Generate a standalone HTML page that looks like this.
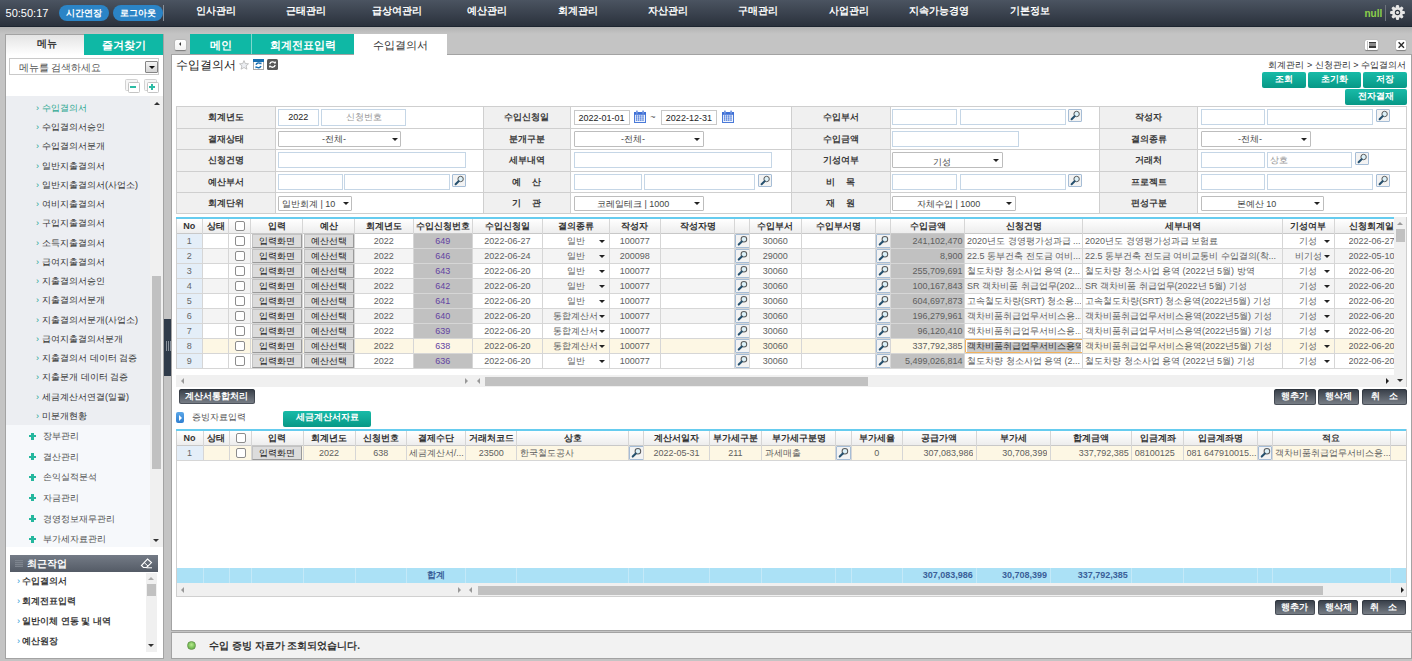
<!DOCTYPE html><html><head><meta charset="utf-8"><style>body{margin:0;width:1412px;height:661px;overflow:hidden;position:relative;font-family:"Liberation Sans",sans-serif}body>div,body>svg{position:absolute}</style></head><body><div style="left:0px;top:0px;width:1412px;height:661px;background:#c4c4c4"></div>
<div style="left:0px;top:27px;width:1412px;height:7px;background:linear-gradient(#b3b3b3,#c4c4c4)"></div>
<div style="left:0px;top:0px;width:1412px;height:27px;background:linear-gradient(#4b5461,#2a313c);border-bottom:1px solid #1d2530;box-sizing:border-box"></div>
<div style="left:4px;top:4px;width:46px;height:18px;line-height:18px;text-align:center;white-space:nowrap;overflow:hidden;color:#fff;font-size:11px">50:50:17</div>
<div style="left:59px;top:5px;width:50px;height:16px;background:#2b84c6;border-radius:8px"></div>
<div style="left:59px;top:5px;width:50px;height:16px;line-height:16px;text-align:center;white-space:nowrap;overflow:hidden;color:#fff;font-size:9px;font-weight:bold">시간연장</div>
<div style="left:113px;top:5px;width:50px;height:16px;background:#2b84c6;border-radius:8px"></div>
<div style="left:113px;top:5px;width:50px;height:16px;line-height:16px;text-align:center;white-space:nowrap;overflow:hidden;color:#fff;font-size:9px;font-weight:bold">로그아웃</div>
<div style="left:163px;top:5px;width:1px;height:16px;background:#8a9099"></div>
<div style="left:171.0px;top:2px;width:90px;height:17px;line-height:17px;text-align:center;white-space:nowrap;overflow:hidden;color:#fff;font-size:10px;font-weight:bold">인사관리</div>
<div style="left:261.4px;top:2px;width:90px;height:17px;line-height:17px;text-align:center;white-space:nowrap;overflow:hidden;color:#fff;font-size:10px;font-weight:bold">근태관리</div>
<div style="left:351.8px;top:2px;width:90px;height:17px;line-height:17px;text-align:center;white-space:nowrap;overflow:hidden;color:#fff;font-size:10px;font-weight:bold">급상여관리</div>
<div style="left:442.20000000000005px;top:2px;width:90px;height:17px;line-height:17px;text-align:center;white-space:nowrap;overflow:hidden;color:#fff;font-size:10px;font-weight:bold">예산관리</div>
<div style="left:532.6px;top:2px;width:90px;height:17px;line-height:17px;text-align:center;white-space:nowrap;overflow:hidden;color:#fff;font-size:10px;font-weight:bold">회계관리</div>
<div style="left:623.0px;top:2px;width:90px;height:17px;line-height:17px;text-align:center;white-space:nowrap;overflow:hidden;color:#fff;font-size:10px;font-weight:bold">자산관리</div>
<div style="left:713.4000000000001px;top:2px;width:90px;height:17px;line-height:17px;text-align:center;white-space:nowrap;overflow:hidden;color:#fff;font-size:10px;font-weight:bold">구매관리</div>
<div style="left:803.8000000000001px;top:2px;width:90px;height:17px;line-height:17px;text-align:center;white-space:nowrap;overflow:hidden;color:#fff;font-size:10px;font-weight:bold">사업관리</div>
<div style="left:894.2px;top:2px;width:90px;height:17px;line-height:17px;text-align:center;white-space:nowrap;overflow:hidden;color:#fff;font-size:10px;font-weight:bold">지속가능경영</div>
<div style="left:984.5999999999999px;top:2px;width:90px;height:17px;line-height:17px;text-align:center;white-space:nowrap;overflow:hidden;color:#fff;font-size:10px;font-weight:bold">기본정보</div>
<div style="left:1360px;top:4.6px;width:22.3px;height:17px;line-height:17px;text-align:right;white-space:nowrap;overflow:hidden;color:#8ccf4a;font-size:10px;font-weight:bold">null</div>
<div style="left:1385px;top:5px;width:1.2px;height:16px;background:#6d737c"></div>
<svg style="position:absolute;left:1389.9px;top:5.1px" width="15" height="15" viewBox="-7.5 -7.5 15 15"><rect x="-1.6" y="-7.4" width="3.2" height="3.6" rx="1.2" fill="#e6e6e6" transform="rotate(0)"/><rect x="-1.6" y="-7.4" width="3.2" height="3.6" rx="1.2" fill="#e6e6e6" transform="rotate(45)"/><rect x="-1.6" y="-7.4" width="3.2" height="3.6" rx="1.2" fill="#e6e6e6" transform="rotate(90)"/><rect x="-1.6" y="-7.4" width="3.2" height="3.6" rx="1.2" fill="#e6e6e6" transform="rotate(135)"/><rect x="-1.6" y="-7.4" width="3.2" height="3.6" rx="1.2" fill="#e6e6e6" transform="rotate(180)"/><rect x="-1.6" y="-7.4" width="3.2" height="3.6" rx="1.2" fill="#e6e6e6" transform="rotate(225)"/><rect x="-1.6" y="-7.4" width="3.2" height="3.6" rx="1.2" fill="#e6e6e6" transform="rotate(270)"/><rect x="-1.6" y="-7.4" width="3.2" height="3.6" rx="1.2" fill="#e6e6e6" transform="rotate(315)"/><circle r="5.4" fill="#e6e6e6"/><circle r="2.7" fill="#2c333d"/><circle r="1.6" fill="#e6e6e6"/></svg>
<div style="left:5px;top:34px;width:159px;height:625px;background:#fff;border:1px solid #a3a3a3;box-sizing:border-box"></div>
<div style="left:6px;top:35px;width:78px;height:20px;background:linear-gradient(#e4e4e4,#fff)"></div>
<div style="left:8px;top:34px;width:78px;height:20px;line-height:20px;text-align:center;white-space:nowrap;overflow:hidden;color:#3a3a3a;font-size:10px;font-weight:bold">메뉴</div>
<div style="left:84px;top:34px;width:79px;height:21px;background:#0fb8a5"></div>
<div style="left:84px;top:35px;width:79px;height:20px;line-height:20px;text-align:center;white-space:nowrap;overflow:hidden;color:#fff;font-size:11px;font-weight:bold">즐겨찾기</div>
<div style="left:9px;top:58px;width:150px;height:17px;background:#fff;border:1px solid #c9c9c9;box-sizing:border-box"></div>
<div style="left:18.5px;top:60px;width:120px;height:15px;line-height:15px;text-align:left;white-space:nowrap;overflow:hidden;color:#555;font-size:9.5px">메뉴를 검색하세요</div>
<div style="left:145px;top:61px;width:13px;height:12px;background:linear-gradient(#f4f4f4,#d4d4d4);border:1px solid #858585;box-sizing:border-box;border-radius:1px"></div>
<div style="left:148.7px;top:65.7px;width:0;height:0;border-left:3px solid transparent;border-right:3px solid transparent;border-top:3.3px solid #111"></div>
<div style="left:125px;top:79.4px;width:12.5px;height:11.6px;background:#f6f6f6;border:1px solid #d2d2d2;border-radius:1.5px;box-sizing:border-box"></div>
<div style="left:127.5px;top:81.7px;width:12.3px;height:11px;background:#fff;border:1px solid #c4c4c4;border-radius:1.5px;box-sizing:border-box"></div>
<div style="left:130.2px;top:86px;width:6.3px;height:2.2px;background:#2dbba4"></div>
<div style="left:144px;top:79.4px;width:12.5px;height:11.6px;background:#f6f6f6;border:1px solid #d2d2d2;border-radius:1.5px;box-sizing:border-box"></div>
<div style="left:146.5px;top:81.7px;width:12.3px;height:11px;background:#fff;border:1px solid #c4c4c4;border-radius:1.5px;box-sizing:border-box"></div>
<div style="left:149.2px;top:86px;width:6.3px;height:2.2px;background:#2dbba4"></div>
<div style="left:151.25px;top:83.9px;width:2.2px;height:6.4px;background:#2dbba4"></div>
<div style="left:6px;top:96px;width:144px;height:329px;background:#eceef2"></div>
<div style="left:6px;top:425px;width:144px;height:122px;background:#f6f8fb"></div>
<div style="left:150px;top:96px;width:13px;height:451px;background:#f0f0f0"></div>
<div style="left:152px;top:276px;width:9px;height:193px;background:#c1c1c1"></div>
<div style="left:153.8px;top:102px;width:0;height:0;border-left:3px solid transparent;border-right:3px solid transparent;border-bottom:3.2px solid #333"></div>
<div style="left:153px;top:538.5px;width:0;height:0;border-left:3px solid transparent;border-right:3px solid transparent;border-top:3.2px solid #333"></div>
<div style="left:36px;top:100.9px;width:6px;height:14px;line-height:14px;text-align:left;white-space:nowrap;overflow:hidden;color:#1aa593;font-size:9px">›</div>
<div style="left:42px;top:99.9px;width:105px;height:16px;line-height:16px;text-align:left;white-space:nowrap;overflow:hidden;color:#2aa790;font-size:9px">수입결의서</div>
<div style="left:36px;top:120.15px;width:6px;height:14px;line-height:14px;text-align:left;white-space:nowrap;overflow:hidden;color:#1aa593;font-size:9px">›</div>
<div style="left:42px;top:119.15px;width:105px;height:16px;line-height:16px;text-align:left;white-space:nowrap;overflow:hidden;color:#333;font-size:9px">수입결의서승인</div>
<div style="left:36px;top:139.39999999999998px;width:6px;height:14px;line-height:14px;text-align:left;white-space:nowrap;overflow:hidden;color:#1aa593;font-size:9px">›</div>
<div style="left:42px;top:138.39999999999998px;width:105px;height:16px;line-height:16px;text-align:left;white-space:nowrap;overflow:hidden;color:#333;font-size:9px">수입결의서분개</div>
<div style="left:36px;top:158.64999999999998px;width:6px;height:14px;line-height:14px;text-align:left;white-space:nowrap;overflow:hidden;color:#1aa593;font-size:9px">›</div>
<div style="left:42px;top:157.64999999999998px;width:105px;height:16px;line-height:16px;text-align:left;white-space:nowrap;overflow:hidden;color:#333;font-size:9px">일반지출결의서</div>
<div style="left:36px;top:177.89999999999998px;width:6px;height:14px;line-height:14px;text-align:left;white-space:nowrap;overflow:hidden;color:#1aa593;font-size:9px">›</div>
<div style="left:42px;top:176.89999999999998px;width:105px;height:16px;line-height:16px;text-align:left;white-space:nowrap;overflow:hidden;color:#333;font-size:9px">일반지출결의서(사업소)</div>
<div style="left:36px;top:197.14999999999998px;width:6px;height:14px;line-height:14px;text-align:left;white-space:nowrap;overflow:hidden;color:#1aa593;font-size:9px">›</div>
<div style="left:42px;top:196.14999999999998px;width:105px;height:16px;line-height:16px;text-align:left;white-space:nowrap;overflow:hidden;color:#333;font-size:9px">여비지출결의서</div>
<div style="left:36px;top:216.39999999999998px;width:6px;height:14px;line-height:14px;text-align:left;white-space:nowrap;overflow:hidden;color:#1aa593;font-size:9px">›</div>
<div style="left:42px;top:215.39999999999998px;width:105px;height:16px;line-height:16px;text-align:left;white-space:nowrap;overflow:hidden;color:#333;font-size:9px">구입지출결의서</div>
<div style="left:36px;top:235.64999999999998px;width:6px;height:14px;line-height:14px;text-align:left;white-space:nowrap;overflow:hidden;color:#1aa593;font-size:9px">›</div>
<div style="left:42px;top:234.64999999999998px;width:105px;height:16px;line-height:16px;text-align:left;white-space:nowrap;overflow:hidden;color:#333;font-size:9px">소득지출결의서</div>
<div style="left:36px;top:254.89999999999998px;width:6px;height:14px;line-height:14px;text-align:left;white-space:nowrap;overflow:hidden;color:#1aa593;font-size:9px">›</div>
<div style="left:42px;top:253.89999999999998px;width:105px;height:16px;line-height:16px;text-align:left;white-space:nowrap;overflow:hidden;color:#333;font-size:9px">급여지출결의서</div>
<div style="left:36px;top:274.15px;width:6px;height:14px;line-height:14px;text-align:left;white-space:nowrap;overflow:hidden;color:#1aa593;font-size:9px">›</div>
<div style="left:42px;top:273.15px;width:105px;height:16px;line-height:16px;text-align:left;white-space:nowrap;overflow:hidden;color:#333;font-size:9px">지출결의서승인</div>
<div style="left:36px;top:293.4px;width:6px;height:14px;line-height:14px;text-align:left;white-space:nowrap;overflow:hidden;color:#1aa593;font-size:9px">›</div>
<div style="left:42px;top:292.4px;width:105px;height:16px;line-height:16px;text-align:left;white-space:nowrap;overflow:hidden;color:#333;font-size:9px">지출결의서분개</div>
<div style="left:36px;top:312.65px;width:6px;height:14px;line-height:14px;text-align:left;white-space:nowrap;overflow:hidden;color:#1aa593;font-size:9px">›</div>
<div style="left:42px;top:311.65px;width:105px;height:16px;line-height:16px;text-align:left;white-space:nowrap;overflow:hidden;color:#333;font-size:9px">지출결의서분개(사업소)</div>
<div style="left:36px;top:331.9px;width:6px;height:14px;line-height:14px;text-align:left;white-space:nowrap;overflow:hidden;color:#1aa593;font-size:9px">›</div>
<div style="left:42px;top:330.9px;width:105px;height:16px;line-height:16px;text-align:left;white-space:nowrap;overflow:hidden;color:#333;font-size:9px">급여지출결의서분개</div>
<div style="left:36px;top:351.15px;width:6px;height:14px;line-height:14px;text-align:left;white-space:nowrap;overflow:hidden;color:#1aa593;font-size:9px">›</div>
<div style="left:42px;top:350.15px;width:105px;height:16px;line-height:16px;text-align:left;white-space:nowrap;overflow:hidden;color:#333;font-size:9px">지출결의서 데이터 검증</div>
<div style="left:36px;top:370.4px;width:6px;height:14px;line-height:14px;text-align:left;white-space:nowrap;overflow:hidden;color:#1aa593;font-size:9px">›</div>
<div style="left:42px;top:369.4px;width:105px;height:16px;line-height:16px;text-align:left;white-space:nowrap;overflow:hidden;color:#333;font-size:9px">지출분개 데이터 검증</div>
<div style="left:36px;top:389.65px;width:6px;height:14px;line-height:14px;text-align:left;white-space:nowrap;overflow:hidden;color:#1aa593;font-size:9px">›</div>
<div style="left:42px;top:388.65px;width:105px;height:16px;line-height:16px;text-align:left;white-space:nowrap;overflow:hidden;color:#333;font-size:9px">세금계산서연결(일괄)</div>
<div style="left:36px;top:408.9px;width:6px;height:14px;line-height:14px;text-align:left;white-space:nowrap;overflow:hidden;color:#1aa593;font-size:9px">›</div>
<div style="left:42px;top:407.9px;width:105px;height:16px;line-height:16px;text-align:left;white-space:nowrap;overflow:hidden;color:#333;font-size:9px">미분개현황</div>
<div style="left:29px;top:434.9px;width:7px;height:2.2px;background:#24b79e"></div>
<div style="left:31.4px;top:432.5px;width:2.2px;height:7px;background:#24b79e"></div>
<div style="left:43px;top:428.0px;width:105px;height:16px;line-height:16px;text-align:left;white-space:nowrap;overflow:hidden;color:#505050;font-size:9px">장부관리</div>
<div style="left:29px;top:455.54999999999995px;width:7px;height:2.2px;background:#24b79e"></div>
<div style="left:31.4px;top:453.15px;width:2.2px;height:7px;background:#24b79e"></div>
<div style="left:43px;top:448.65px;width:105px;height:16px;line-height:16px;text-align:left;white-space:nowrap;overflow:hidden;color:#505050;font-size:9px">결산관리</div>
<div style="left:29px;top:476.2px;width:7px;height:2.2px;background:#24b79e"></div>
<div style="left:31.4px;top:473.8px;width:2.2px;height:7px;background:#24b79e"></div>
<div style="left:43px;top:469.3px;width:105px;height:16px;line-height:16px;text-align:left;white-space:nowrap;overflow:hidden;color:#505050;font-size:9px">손익실적분석</div>
<div style="left:29px;top:496.84999999999997px;width:7px;height:2.2px;background:#24b79e"></div>
<div style="left:31.4px;top:494.45px;width:2.2px;height:7px;background:#24b79e"></div>
<div style="left:43px;top:489.95px;width:105px;height:16px;line-height:16px;text-align:left;white-space:nowrap;overflow:hidden;color:#505050;font-size:9px">자금관리</div>
<div style="left:29px;top:517.5px;width:7px;height:2.2px;background:#24b79e"></div>
<div style="left:31.4px;top:515.1px;width:2.2px;height:7px;background:#24b79e"></div>
<div style="left:43px;top:510.6px;width:105px;height:16px;line-height:16px;text-align:left;white-space:nowrap;overflow:hidden;color:#505050;font-size:9px">경영정보재무관리</div>
<div style="left:29px;top:538.15px;width:7px;height:2.2px;background:#24b79e"></div>
<div style="left:31.4px;top:535.75px;width:2.2px;height:7px;background:#24b79e"></div>
<div style="left:43px;top:531.25px;width:105px;height:16px;line-height:16px;text-align:left;white-space:nowrap;overflow:hidden;color:#505050;font-size:9px">부가세자료관리</div>
<div style="left:10px;top:554.5px;width:148.3px;height:17px;background:linear-gradient(#747b86,#545b66)"></div>
<div style="left:14.8px;top:560px;width:8.5px;height:7px;background:repeating-linear-gradient(#7d848e 0 1px,#6a717b 1px 2px)"></div>
<div style="left:27px;top:554.5px;width:60px;height:17px;line-height:17px;text-align:left;white-space:nowrap;overflow:hidden;color:#fff;font-size:9.5px;font-weight:bold">최근작업</div>
<svg style="position:absolute;left:140px;top:558px" width="13" height="11" viewBox="0 0 13 11"><path d="M7.5 1L11.5 4.6 6.6 9.5H3.4L1.4 7.5Z" fill="none" stroke="#fff" stroke-width="1.1"/><path d="M4.2 4.6L8.2 8.2" stroke="#fff" stroke-width="1"/><path d="M6.5 9.8H12" stroke="#fff" stroke-width="1"/></svg>
<div style="left:146px;top:573px;width:11px;height:79px;background:#f0f0f0"></div>
<div style="left:147px;top:584px;width:9px;height:12px;background:#c1c1c1"></div>
<div style="left:148px;top:577px;width:0;height:0;border-left:3.5px solid transparent;border-right:3.5px solid transparent;border-bottom:3.5px solid #aaa"></div>
<div style="left:148px;top:644px;width:0;height:0;border-left:3.5px solid transparent;border-right:3.5px solid transparent;border-top:3.5px solid #333"></div>
<div style="left:17px;top:574.2px;width:6px;height:14px;line-height:14px;text-align:left;white-space:nowrap;overflow:hidden;color:#1e9ad6;font-size:9px">›</div>
<div style="left:22px;top:573.2px;width:120px;height:16px;line-height:16px;text-align:left;white-space:nowrap;overflow:hidden;color:#3a3a3a;font-size:9px;font-weight:bold">수입결의서</div>
<div style="left:17px;top:594.0px;width:6px;height:14px;line-height:14px;text-align:left;white-space:nowrap;overflow:hidden;color:#1e9ad6;font-size:9px">›</div>
<div style="left:22px;top:593.0px;width:120px;height:16px;line-height:16px;text-align:left;white-space:nowrap;overflow:hidden;color:#3a3a3a;font-size:9px;font-weight:bold">회계전표입력</div>
<div style="left:17px;top:613.8000000000001px;width:6px;height:14px;line-height:14px;text-align:left;white-space:nowrap;overflow:hidden;color:#1e9ad6;font-size:9px">›</div>
<div style="left:22px;top:612.8000000000001px;width:120px;height:16px;line-height:16px;text-align:left;white-space:nowrap;overflow:hidden;color:#3a3a3a;font-size:9px;font-weight:bold">일반이체 연동 및 내역</div>
<div style="left:17px;top:633.6px;width:6px;height:14px;line-height:14px;text-align:left;white-space:nowrap;overflow:hidden;color:#1e9ad6;font-size:9px">›</div>
<div style="left:22px;top:632.6px;width:120px;height:16px;line-height:16px;text-align:left;white-space:nowrap;overflow:hidden;color:#3a3a3a;font-size:9px;font-weight:bold">예산원장</div>
<div style="left:164px;top:319px;width:7px;height:57px;background:#2f3b4a"></div>
<div style="left:165.5px;top:341px;width:1px;height:10px;background:#8a939e"></div>
<div style="left:167.5px;top:341px;width:1px;height:10px;background:#8a939e"></div>
<div style="left:169.5px;top:341px;width:1px;height:10px;background:#8a939e"></div>
<div style="left:174.8px;top:40px;width:11px;height:10.2px;background:linear-gradient(#fff,#f2f2f2);border-radius:1.5px;box-shadow:0 0.5px 1.2px rgba(0,0,0,.4)"></div>
<div style="left:178.6px;top:42.2px;width:0;height:0;border-top:2.9px solid transparent;border-bottom:2.9px solid transparent;border-right:2.9px solid #3a3a3a"></div>
<div style="left:190px;top:34px;width:61px;height:21px;background:#0fb8a5"></div>
<div style="left:190px;top:35px;width:61px;height:20px;line-height:20px;text-align:center;white-space:nowrap;overflow:hidden;color:#fff;font-size:11px;font-weight:bold">메인</div>
<div style="left:251px;top:34px;width:1px;height:21px;background:#7fd8cd"></div>
<div style="left:252px;top:34px;width:102px;height:21px;background:#0fb8a5"></div>
<div style="left:252px;top:35px;width:102px;height:20px;line-height:20px;text-align:center;white-space:nowrap;overflow:hidden;color:#fff;font-size:11px;font-weight:bold">회계전표입력</div>
<div style="left:354px;top:34px;width:93px;height:21px;background:#fff"></div>
<div style="left:354px;top:35px;width:93px;height:20px;line-height:20px;text-align:center;white-space:nowrap;overflow:hidden;color:#333;font-size:11px">수입결의서</div>
<div style="left:1364.5px;top:40px;width:13.5px;height:10px;background:#fff;border-radius:1.5px;box-shadow:0 0.5px 1px rgba(0,0,0,.35)"></div>
<div style="left:1366.5px;top:40.5px;width:1px;height:9px;background:#c4c4c4"></div>
<div style="left:1369.2px;top:42.2px;width:6.6px;height:5.6px;background:linear-gradient(#3a3a3a 0 1.2px,#8a8a8a 1.2px 4.4px,#3a3a3a 4.4px)"></div>
<div style="left:1395.8px;top:40px;width:10.5px;height:10px;background:#fff;border-radius:1.5px;box-shadow:0 0.5px 1px rgba(0,0,0,.35)"></div>
<svg style="position:absolute;left:1395.8px;top:40px" width="10.5" height="10" viewBox="0 0 10.5 10"><path d="M2.6 2.2L8 7.8M8 2.2L2.6 7.8" stroke="#2a2a2a" stroke-width="1.4"/></svg>
<div style="left:171px;top:54px;width:1241px;height:577px;background:#fff;border:1px solid #a3a3a3;box-sizing:border-box"></div>
<div style="left:354px;top:54px;width:93px;height:2px;background:#fff"></div>
<div style="left:176px;top:56px;width:70px;height:19px;line-height:19px;text-align:left;white-space:nowrap;overflow:hidden;color:#222;font-size:11.5px">수입결의서</div>
<svg style="position:absolute;left:239px;top:60px" width="10" height="10" viewBox="0 0 10 10"><path d="M5 .6L6.3 3.6 9.5 3.8 7.1 5.9 7.9 9.2 5 7.5 2.1 9.2 2.9 5.9 .5 3.8 3.7 3.6Z" fill="#eceef2" stroke="#b5b5b5" stroke-width=".8"/></svg>
<svg style="position:absolute;left:253px;top:59px" width="11" height="11" viewBox="0 0 11 11"><rect x=".5" y=".5" width="10" height="10" fill="#fff" stroke="#a8a8a8"/><rect x="0" y="0" width="11" height="3" fill="#1a6fb0"/><path d="M3 5.8A2.6 2.6 0 0 1 7.6 5" stroke="#1a6fb0" stroke-width="1.4" fill="none"/><path d="M8 7A2.6 2.6 0 0 1 3.4 7.6" stroke="#1a6fb0" stroke-width="1.4" fill="none"/><path d="M6.6 3.8L8.4 5.6 8.6 3.4Z" fill="#1a6fb0"/><path d="M4.4 8.8L2.6 7 2.4 9.2Z" fill="#1a6fb0"/></svg>
<svg style="position:absolute;left:267px;top:59px" width="11" height="11" viewBox="0 0 11 11"><rect x="0" y="0" width="11" height="11" rx="1.5" fill="#585858"/><path d="M2.8 5.2A2.8 2.8 0 0 1 8 4.4" stroke="#fff" stroke-width="1.3" fill="none"/><path d="M8.2 6A2.8 2.8 0 0 1 3 6.8" stroke="#fff" stroke-width="1.3" fill="none"/><path d="M7 3L8.8 4.8 9 2.6Z" fill="#fff"/><path d="M4 8L2.2 6.2 2 8.4Z" fill="#fff"/></svg>
<div style="left:1200px;top:57px;width:206px;height:16px;line-height:16px;text-align:right;white-space:nowrap;overflow:hidden;color:#333;font-size:9px">회계관리 &gt; 신청관리 &gt; 수입결의서</div>
<div style="left:1262px;top:72px;width:44px;height:16px;background:linear-gradient(#18bba8,#079886);border-radius:2px"></div>
<div style="left:1262px;top:70.7px;width:44px;height:16px;line-height:16px;text-align:center;white-space:nowrap;overflow:hidden;color:#fff;font-size:9px;font-weight:bold">조회</div>
<div style="left:1308px;top:72px;width:52.5px;height:16px;background:linear-gradient(#18bba8,#079886);border-radius:2px"></div>
<div style="left:1308px;top:70.7px;width:52.5px;height:16px;line-height:16px;text-align:center;white-space:nowrap;overflow:hidden;color:#fff;font-size:9px;font-weight:bold">초기화</div>
<div style="left:1363px;top:72px;width:44px;height:16px;background:linear-gradient(#18bba8,#079886);border-radius:2px"></div>
<div style="left:1363px;top:70.7px;width:44px;height:16px;line-height:16px;text-align:center;white-space:nowrap;overflow:hidden;color:#fff;font-size:9px;font-weight:bold">저장</div>
<div style="left:1345px;top:89px;width:62px;height:16px;background:linear-gradient(#18bba8,#079886);border-radius:2px"></div>
<div style="left:1345px;top:87.7px;width:62px;height:16px;line-height:16px;text-align:center;white-space:nowrap;overflow:hidden;color:#fff;font-size:9px;font-weight:bold">전자결재</div>
<div style="left:176px;top:106px;width:1231px;height:108px;background:#fff"></div>
<div style="left:176.5px;top:106.5px;width:98.5px;height:107.30000000000001px;background:#f0f0f0"></div>
<div style="left:483px;top:106.5px;width:87.5px;height:107.30000000000001px;background:#f0f0f0"></div>
<div style="left:791.5px;top:106.5px;width:98.5px;height:107.30000000000001px;background:#f0f0f0"></div>
<div style="left:1099.5px;top:106.5px;width:98.0px;height:107.30000000000001px;background:#f0f0f0"></div>
<div style="left:176px;top:106.0px;width:1231px;height:1px;background:#cfcfcf"></div>
<div style="left:176px;top:127.5px;width:1231px;height:1px;background:#cfcfcf"></div>
<div style="left:176px;top:148.8px;width:1231px;height:1px;background:#cfcfcf"></div>
<div style="left:176px;top:170.5px;width:1231px;height:1px;background:#cfcfcf"></div>
<div style="left:176px;top:191.9px;width:1231px;height:1px;background:#cfcfcf"></div>
<div style="left:176px;top:213.3px;width:1231px;height:1px;background:#cfcfcf"></div>
<div style="left:176.0px;top:106px;width:1px;height:108px;background:#cfcfcf"></div>
<div style="left:274.5px;top:106px;width:1px;height:108px;background:#cfcfcf"></div>
<div style="left:482.5px;top:106px;width:1px;height:108px;background:#cfcfcf"></div>
<div style="left:570.0px;top:106px;width:1px;height:108px;background:#cfcfcf"></div>
<div style="left:791.0px;top:106px;width:1px;height:108px;background:#cfcfcf"></div>
<div style="left:889.5px;top:106px;width:1px;height:108px;background:#cfcfcf"></div>
<div style="left:1099.0px;top:106px;width:1px;height:108px;background:#cfcfcf"></div>
<div style="left:1197.0px;top:106px;width:1px;height:108px;background:#cfcfcf"></div>
<div style="left:1406.0px;top:106px;width:1px;height:108px;background:#cfcfcf"></div>
<div style="left:176.5px;top:107.3px;width:98.5px;height:21.5px;line-height:21.5px;text-align:center;white-space:nowrap;overflow:hidden;color:#3a3a3a;font-size:9px;font-weight:bold">회계년도</div>
<div style="left:483px;top:107.3px;width:87.5px;height:21.5px;line-height:21.5px;text-align:center;white-space:nowrap;overflow:hidden;color:#3a3a3a;font-size:9px;font-weight:bold">수입신청일</div>
<div style="left:791.5px;top:107.3px;width:98.5px;height:21.5px;line-height:21.5px;text-align:center;white-space:nowrap;overflow:hidden;color:#3a3a3a;font-size:9px;font-weight:bold">수입부서</div>
<div style="left:1099.5px;top:107.3px;width:98.0px;height:21.5px;line-height:21.5px;text-align:center;white-space:nowrap;overflow:hidden;color:#3a3a3a;font-size:9px;font-weight:bold">작성자</div>
<div style="left:176.5px;top:128.8px;width:98.5px;height:21.30000000000001px;line-height:21.30000000000001px;text-align:center;white-space:nowrap;overflow:hidden;color:#3a3a3a;font-size:9px;font-weight:bold">결재상태</div>
<div style="left:483px;top:128.8px;width:87.5px;height:21.30000000000001px;line-height:21.30000000000001px;text-align:center;white-space:nowrap;overflow:hidden;color:#3a3a3a;font-size:9px;font-weight:bold">분개구분</div>
<div style="left:791.5px;top:128.8px;width:98.5px;height:21.30000000000001px;line-height:21.30000000000001px;text-align:center;white-space:nowrap;overflow:hidden;color:#3a3a3a;font-size:9px;font-weight:bold">수입금액</div>
<div style="left:1099.5px;top:128.8px;width:98.0px;height:21.30000000000001px;line-height:21.30000000000001px;text-align:center;white-space:nowrap;overflow:hidden;color:#3a3a3a;font-size:9px;font-weight:bold">결의종류</div>
<div style="left:176.5px;top:150.10000000000002px;width:98.5px;height:21.69999999999999px;line-height:21.69999999999999px;text-align:center;white-space:nowrap;overflow:hidden;color:#3a3a3a;font-size:9px;font-weight:bold">신청건명</div>
<div style="left:483px;top:150.10000000000002px;width:87.5px;height:21.69999999999999px;line-height:21.69999999999999px;text-align:center;white-space:nowrap;overflow:hidden;color:#3a3a3a;font-size:9px;font-weight:bold">세부내역</div>
<div style="left:791.5px;top:150.10000000000002px;width:98.5px;height:21.69999999999999px;line-height:21.69999999999999px;text-align:center;white-space:nowrap;overflow:hidden;color:#3a3a3a;font-size:9px;font-weight:bold">기성여부</div>
<div style="left:1099.5px;top:150.10000000000002px;width:98.0px;height:21.69999999999999px;line-height:21.69999999999999px;text-align:center;white-space:nowrap;overflow:hidden;color:#3a3a3a;font-size:9px;font-weight:bold">거래처</div>
<div style="left:176.5px;top:171.8px;width:98.5px;height:21.400000000000006px;line-height:21.400000000000006px;text-align:center;white-space:nowrap;overflow:hidden;color:#3a3a3a;font-size:9px;font-weight:bold">예산부서</div>
<div style="left:483px;top:171.8px;width:87.5px;height:21.400000000000006px;line-height:21.400000000000006px;text-align:center;white-space:nowrap;overflow:hidden;color:#3a3a3a;font-size:9px;font-weight:bold">예　 산</div>
<div style="left:791.5px;top:171.8px;width:98.5px;height:21.400000000000006px;line-height:21.400000000000006px;text-align:center;white-space:nowrap;overflow:hidden;color:#3a3a3a;font-size:9px;font-weight:bold">비　 목</div>
<div style="left:1099.5px;top:171.8px;width:98.0px;height:21.400000000000006px;line-height:21.400000000000006px;text-align:center;white-space:nowrap;overflow:hidden;color:#3a3a3a;font-size:9px;font-weight:bold">프로젝트</div>
<div style="left:176.5px;top:193.20000000000002px;width:98.5px;height:21.400000000000006px;line-height:21.400000000000006px;text-align:center;white-space:nowrap;overflow:hidden;color:#3a3a3a;font-size:9px;font-weight:bold">회계단위</div>
<div style="left:483px;top:193.20000000000002px;width:87.5px;height:21.400000000000006px;line-height:21.400000000000006px;text-align:center;white-space:nowrap;overflow:hidden;color:#3a3a3a;font-size:9px;font-weight:bold">기　 관</div>
<div style="left:791.5px;top:193.20000000000002px;width:98.5px;height:21.400000000000006px;line-height:21.400000000000006px;text-align:center;white-space:nowrap;overflow:hidden;color:#3a3a3a;font-size:9px;font-weight:bold">재　 원</div>
<div style="left:1099.5px;top:193.20000000000002px;width:98.0px;height:21.400000000000006px;line-height:21.400000000000006px;text-align:center;white-space:nowrap;overflow:hidden;color:#3a3a3a;font-size:9px;font-weight:bold">편성구분</div>
<div style="left:277.7px;top:109.2px;width:41.10000000000002px;height:16.39999999999999px;background:#fff;border:1px solid #c5d6e6;box-sizing:border-box"></div>
<div style="left:277.7px;top:109.2px;width:41.10000000000002px;height:16.39999999999999px;line-height:16.39999999999999px;text-align:center;white-space:nowrap;overflow:hidden;color:#222;font-size:9px">2022</div>
<div style="left:320.6px;top:109.2px;width:85.89999999999998px;height:16.39999999999999px;background:#fff;border:1px solid #c5d6e6;box-sizing:border-box"></div>
<div style="left:320.6px;top:109.2px;width:85.89999999999998px;height:16.39999999999999px;line-height:16.39999999999999px;text-align:center;white-space:nowrap;overflow:hidden;color:#999;font-size:9px">신청번호</div>
<div style="left:573.5px;top:110.2px;width:56.1px;height:14.5px;background:#fff;border:1px solid #c8c8c8;box-sizing:border-box"></div>
<div style="left:573.5px;top:110.7px;width:56.1px;height:14.5px;line-height:14.5px;text-align:center;white-space:nowrap;overflow:hidden;color:#222;font-size:9px">2022-01-01</div>
<svg style="position:absolute;left:634px;top:110.3px" width="12" height="13" viewBox="0 0 12 13"><rect x=".5" y="2.5" width="11" height="10" fill="#eef3fc" stroke="#4a7ad8"/><rect x="0" y="2.2" width="12" height="2.6" fill="#3d6fd6"/><rect x="2" y=".6" width="1.8" height="3" fill="#7598e0"/><rect x="8.2" y=".6" width="1.8" height="3" fill="#7598e0"/><circle cx="2.6" cy="6" r=".85" fill="#3d6fd6"/><circle cx="4.7" cy="6" r=".85" fill="#3d6fd6"/><circle cx="6.8" cy="6" r=".85" fill="#3d6fd6"/><circle cx="9" cy="6" r=".85" fill="#3d6fd6"/><circle cx="2.6" cy="8" r=".85" fill="#3d6fd6"/><circle cx="4.7" cy="8" r=".85" fill="#3d6fd6"/><circle cx="6.8" cy="8" r=".85" fill="#3d6fd6"/><circle cx="9" cy="8" r=".85" fill="#3d6fd6"/><circle cx="2.6" cy="10" r=".85" fill="#3d6fd6"/><circle cx="4.7" cy="10" r=".85" fill="#3d6fd6"/><circle cx="6.8" cy="10" r=".85" fill="#3d6fd6"/><circle cx="9" cy="10" r=".85" fill="#3d6fd6"/></svg>
<div style="left:648px;top:110px;width:10px;height:14px;line-height:14px;text-align:center;white-space:nowrap;overflow:hidden;color:#555;font-size:9px">~</div>
<div style="left:660.7px;top:110.2px;width:56.4px;height:14.5px;background:#fff;border:1px solid #c8c8c8;box-sizing:border-box"></div>
<div style="left:660.7px;top:110.7px;width:56.4px;height:14.5px;line-height:14.5px;text-align:center;white-space:nowrap;overflow:hidden;color:#222;font-size:9px">2022-12-31</div>
<svg style="position:absolute;left:722px;top:110.3px" width="12" height="13" viewBox="0 0 12 13"><rect x=".5" y="2.5" width="11" height="10" fill="#eef3fc" stroke="#4a7ad8"/><rect x="0" y="2.2" width="12" height="2.6" fill="#3d6fd6"/><rect x="2" y=".6" width="1.8" height="3" fill="#7598e0"/><rect x="8.2" y=".6" width="1.8" height="3" fill="#7598e0"/><circle cx="2.6" cy="6" r=".85" fill="#3d6fd6"/><circle cx="4.7" cy="6" r=".85" fill="#3d6fd6"/><circle cx="6.8" cy="6" r=".85" fill="#3d6fd6"/><circle cx="9" cy="6" r=".85" fill="#3d6fd6"/><circle cx="2.6" cy="8" r=".85" fill="#3d6fd6"/><circle cx="4.7" cy="8" r=".85" fill="#3d6fd6"/><circle cx="6.8" cy="8" r=".85" fill="#3d6fd6"/><circle cx="9" cy="8" r=".85" fill="#3d6fd6"/><circle cx="2.6" cy="10" r=".85" fill="#3d6fd6"/><circle cx="4.7" cy="10" r=".85" fill="#3d6fd6"/><circle cx="6.8" cy="10" r=".85" fill="#3d6fd6"/><circle cx="9" cy="10" r=".85" fill="#3d6fd6"/></svg>
<div style="left:892.4px;top:109.3px;width:65.10000000000002px;height:16.10000000000001px;background:#fff;border:1px solid #c5d6e6;box-sizing:border-box"></div>
<div style="left:959.7px;top:109.3px;width:106.09999999999991px;height:16.10000000000001px;background:#fff;border:1px solid #c5d6e6;box-sizing:border-box"></div>
<div style="left:1068px;top:109.4px;width:14px;height:13px;background:#f3f3f3;border:1px solid #a6bdd6;box-sizing:border-box;border-radius:1px"></div>
<svg style="position:absolute;left:1068px;top:109.4px" width="14" height="13" viewBox="0 0 14 13"><circle cx="8.6" cy="5" r="2.7" fill="#dcf1f9" stroke="#5a5a5a" stroke-width="1"/><path d="M3.6 10.2L6.6 7.2" stroke="#25506e" stroke-width="2" stroke-linecap="round"/></svg>
<div style="left:1200.5px;top:109.3px;width:64.79999999999995px;height:16.10000000000001px;background:#fff;border:1px solid #c5d6e6;box-sizing:border-box"></div>
<div style="left:1267.3px;top:109.3px;width:106.20000000000005px;height:16.10000000000001px;background:#fff;border:1px solid #c5d6e6;box-sizing:border-box"></div>
<div style="left:1375.5px;top:109.4px;width:14px;height:13px;background:#f3f3f3;border:1px solid #a6bdd6;box-sizing:border-box;border-radius:1px"></div>
<svg style="position:absolute;left:1375.5px;top:109.4px" width="14" height="13" viewBox="0 0 14 13"><circle cx="8.6" cy="5" r="2.7" fill="#dcf1f9" stroke="#5a5a5a" stroke-width="1"/><path d="M3.6 10.2L6.6 7.2" stroke="#25506e" stroke-width="2" stroke-linecap="round"/></svg>
<div style="left:277.7px;top:131.1px;width:123.30000000000001px;height:15.599999999999994px;background:#fff;border:1px solid #bdbdbd;box-sizing:border-box;border-radius:1px"></div>
<div style="left:277.7px;top:132.29999999999998px;width:112.69999999999999px;height:15.599999999999994px;line-height:15.599999999999994px;text-align:center;white-space:nowrap;overflow:hidden;color:#444;font-size:9px">-전체-</div>
<div style="left:391.5px;top:137.7px;width:0;height:0;border-left:3.5px solid transparent;border-right:3.5px solid transparent;border-top:3.5px solid #222"></div>
<div style="left:573.5px;top:131.1px;width:130.10000000000002px;height:15.599999999999994px;background:#fff;border:1px solid #bdbdbd;box-sizing:border-box;border-radius:1px"></div>
<div style="left:573.5px;top:132.29999999999998px;width:119.20000000000005px;height:15.599999999999994px;line-height:15.599999999999994px;text-align:center;white-space:nowrap;overflow:hidden;color:#444;font-size:9px">-전체-</div>
<div style="left:693.8000000000001px;top:137.7px;width:0;height:0;border-left:3.5px solid transparent;border-right:3.5px solid transparent;border-top:3.5px solid #222"></div>
<div style="left:892.4px;top:131.1px;width:126.80000000000007px;height:15.599999999999994px;background:#fff;border:1px solid #c5d6e6;box-sizing:border-box"></div>
<div style="left:1200.5px;top:131.1px;width:110.5px;height:15.599999999999994px;background:#fff;border:1px solid #bdbdbd;box-sizing:border-box;border-radius:1px"></div>
<div style="left:1200.5px;top:132.29999999999998px;width:99.20000000000005px;height:15.599999999999994px;line-height:15.599999999999994px;text-align:center;white-space:nowrap;overflow:hidden;color:#444;font-size:9px">-전체-</div>
<div style="left:1300.8px;top:137.7px;width:0;height:0;border-left:3.5px solid transparent;border-right:3.5px solid transparent;border-top:3.5px solid #222"></div>
<div style="left:277.6px;top:152.3px;width:188.2px;height:16.0px;background:#fff;border:1px solid #c5d6e6;box-sizing:border-box"></div>
<div style="left:573.5px;top:152.3px;width:198.39999999999998px;height:16.0px;background:#fff;border:1px solid #c5d6e6;box-sizing:border-box"></div>
<div style="left:892.4px;top:152.3px;width:110.20000000000005px;height:16.0px;background:#fff;border:1px solid #bdbdbd;box-sizing:border-box;border-radius:1px"></div>
<div style="left:892.4px;top:153.5px;width:99.30000000000007px;height:16.0px;line-height:16.0px;text-align:center;white-space:nowrap;overflow:hidden;color:#444;font-size:9px">기성</div>
<div style="left:992.8000000000001px;top:159.10000000000002px;width:0;height:0;border-left:3.5px solid transparent;border-right:3.5px solid transparent;border-top:3.5px solid #222"></div>
<div style="left:1200.5px;top:152.3px;width:64.79999999999995px;height:16.0px;background:#fff;border:1px solid #c5d6e6;box-sizing:border-box"></div>
<div style="left:1267.3px;top:152.3px;width:85.20000000000005px;height:16.0px;background:#fff;border:1px solid #c5d6e6;box-sizing:border-box"></div>
<div style="left:1270.3px;top:152.3px;width:82.20000000000005px;height:16.0px;line-height:16.0px;text-align:left;white-space:nowrap;overflow:hidden;color:#999;font-size:9px">상호</div>
<div style="left:1355px;top:152.4px;width:14px;height:13px;background:#f3f3f3;border:1px solid #a6bdd6;box-sizing:border-box;border-radius:1px"></div>
<svg style="position:absolute;left:1355px;top:152.4px" width="14" height="13" viewBox="0 0 14 13"><circle cx="8.6" cy="5" r="2.7" fill="#dcf1f9" stroke="#5a5a5a" stroke-width="1"/><path d="M3.6 10.2L6.6 7.2" stroke="#25506e" stroke-width="2" stroke-linecap="round"/></svg>
<div style="left:277.6px;top:173.9px;width:65.0px;height:15.799999999999983px;background:#fff;border:1px solid #c5d6e6;box-sizing:border-box"></div>
<div style="left:344.1px;top:173.9px;width:106.39999999999998px;height:15.799999999999983px;background:#fff;border:1px solid #c5d6e6;box-sizing:border-box"></div>
<div style="left:452.3px;top:174px;width:14px;height:13px;background:#f3f3f3;border:1px solid #a6bdd6;box-sizing:border-box;border-radius:1px"></div>
<svg style="position:absolute;left:452.3px;top:174px" width="14" height="13" viewBox="0 0 14 13"><circle cx="8.6" cy="5" r="2.7" fill="#dcf1f9" stroke="#5a5a5a" stroke-width="1"/><path d="M3.6 10.2L6.6 7.2" stroke="#25506e" stroke-width="2" stroke-linecap="round"/></svg>
<div style="left:573.5px;top:173.9px;width:68.10000000000002px;height:15.799999999999983px;background:#fff;border:1px solid #c5d6e6;box-sizing:border-box"></div>
<div style="left:643.7px;top:173.9px;width:111.59999999999991px;height:15.799999999999983px;background:#fff;border:1px solid #c5d6e6;box-sizing:border-box"></div>
<div style="left:757.6px;top:174px;width:14px;height:13px;background:#f3f3f3;border:1px solid #a6bdd6;box-sizing:border-box;border-radius:1px"></div>
<svg style="position:absolute;left:757.6px;top:174px" width="14" height="13" viewBox="0 0 14 13"><circle cx="8.6" cy="5" r="2.7" fill="#dcf1f9" stroke="#5a5a5a" stroke-width="1"/><path d="M3.6 10.2L6.6 7.2" stroke="#25506e" stroke-width="2" stroke-linecap="round"/></svg>
<div style="left:892.4px;top:173.9px;width:65.10000000000002px;height:15.799999999999983px;background:#fff;border:1px solid #c5d6e6;box-sizing:border-box"></div>
<div style="left:959.7px;top:173.9px;width:106.09999999999991px;height:15.799999999999983px;background:#fff;border:1px solid #c5d6e6;box-sizing:border-box"></div>
<div style="left:1068px;top:174px;width:14px;height:13px;background:#f3f3f3;border:1px solid #a6bdd6;box-sizing:border-box;border-radius:1px"></div>
<svg style="position:absolute;left:1068px;top:174px" width="14" height="13" viewBox="0 0 14 13"><circle cx="8.6" cy="5" r="2.7" fill="#dcf1f9" stroke="#5a5a5a" stroke-width="1"/><path d="M3.6 10.2L6.6 7.2" stroke="#25506e" stroke-width="2" stroke-linecap="round"/></svg>
<div style="left:1200.5px;top:173.9px;width:64.79999999999995px;height:15.799999999999983px;background:#fff;border:1px solid #c5d6e6;box-sizing:border-box"></div>
<div style="left:1267.3px;top:173.9px;width:106.20000000000005px;height:15.799999999999983px;background:#fff;border:1px solid #c5d6e6;box-sizing:border-box"></div>
<div style="left:1375.5px;top:174px;width:14px;height:13px;background:#f3f3f3;border:1px solid #a6bdd6;box-sizing:border-box;border-radius:1px"></div>
<svg style="position:absolute;left:1375.5px;top:174px" width="14" height="13" viewBox="0 0 14 13"><circle cx="8.6" cy="5" r="2.7" fill="#dcf1f9" stroke="#5a5a5a" stroke-width="1"/><path d="M3.6 10.2L6.6 7.2" stroke="#25506e" stroke-width="2" stroke-linecap="round"/></svg>
<div style="left:277.6px;top:195.6px;width:74.69999999999999px;height:15.800000000000011px;background:#fff;border:1px solid #bdbdbd;box-sizing:border-box;border-radius:1px"></div>
<div style="left:282px;top:196.79999999999998px;width:63.39999999999998px;height:15.800000000000011px;line-height:15.800000000000011px;text-align:left;white-space:nowrap;overflow:hidden;color:#444;font-size:9px">일반회계 | 10</div>
<div style="left:342.5px;top:202.3px;width:0;height:0;border-left:3.5px solid transparent;border-right:3.5px solid transparent;border-top:3.5px solid #222"></div>
<div style="left:573.5px;top:195.6px;width:130.10000000000002px;height:15.800000000000011px;background:#fff;border:1px solid #bdbdbd;box-sizing:border-box;border-radius:1px"></div>
<div style="left:573.5px;top:196.79999999999998px;width:119.20000000000005px;height:15.800000000000011px;line-height:15.800000000000011px;text-align:center;white-space:nowrap;overflow:hidden;color:#444;font-size:9px">코레일테크 | 1000</div>
<div style="left:693.8000000000001px;top:202.3px;width:0;height:0;border-left:3.5px solid transparent;border-right:3.5px solid transparent;border-top:3.5px solid #222"></div>
<div style="left:892.4px;top:195.6px;width:123.70000000000005px;height:15.800000000000011px;background:#fff;border:1px solid #bdbdbd;box-sizing:border-box;border-radius:1px"></div>
<div style="left:892.4px;top:196.79999999999998px;width:112.60000000000002px;height:15.800000000000011px;line-height:15.800000000000011px;text-align:center;white-space:nowrap;overflow:hidden;color:#444;font-size:9px">자체수입 | 1000</div>
<div style="left:1006.1px;top:202.3px;width:0;height:0;border-left:3.5px solid transparent;border-right:3.5px solid transparent;border-top:3.5px solid #222"></div>
<div style="left:1200.5px;top:195.6px;width:123.09999999999991px;height:15.800000000000011px;background:#fff;border:1px solid #bdbdbd;box-sizing:border-box;border-radius:1px"></div>
<div style="left:1200.5px;top:196.79999999999998px;width:112.0px;height:15.800000000000011px;line-height:15.800000000000011px;text-align:center;white-space:nowrap;overflow:hidden;color:#444;font-size:9px">본예산 10</div>
<div style="left:1313.6px;top:202.3px;width:0;height:0;border-left:3.5px solid transparent;border-right:3.5px solid transparent;border-top:3.5px solid #222"></div>
<div style="left:176px;top:217px;width:1218px;height:2px;background:#66ccef"></div>
<div style="left:176px;top:219px;width:1218px;height:14.5px;background:linear-gradient(#ffffff,#ececec)"></div>
<div style="left:176px;top:233px;width:1218px;height:1px;background:#c8c8c8"></div>
<div style="left:176px;top:233.5px;width:1218px;height:15px;background:#ffffff"></div>
<div style="left:176px;top:233.5px;width:26.5px;height:15px;background:#e4eef8"></div>
<div style="left:413px;top:233.5px;width:59.3px;height:15px;background:#c1c1c1"></div>
<div style="left:890.6px;top:233.5px;width:74px;height:15px;background:#c1c1c1"></div>
<div style="left:176px;top:248.0px;width:1218px;height:1px;background:#d6d6d6"></div>
<div style="left:176px;top:233.5px;width:26.5px;height:15px;line-height:15px;text-align:center;white-space:nowrap;overflow:hidden;color:#666;font-size:9px">1</div>
<div style="left:234.5px;top:236.0px;width:10px;height:10px;background:#fff;border:1px solid #8c8c8c;box-sizing:border-box;border-radius:2px"></div>
<div style="left:251.5px;top:234.0px;width:50.0px;height:14.0px;background:#dcdcdc;border:1px solid #c2c2c2;border-right-color:#9a9a9a;border-bottom-color:#9a9a9a;box-sizing:border-box"></div>
<div style="left:251.5px;top:234.3px;width:50.0px;height:14.0px;line-height:14.0px;text-align:center;white-space:nowrap;overflow:hidden;color:#1a1a1a;font-size:9px">입력화면</div>
<div style="left:303.5px;top:234.0px;width:50.0px;height:14.0px;background:#dcdcdc;border:1px solid #c2c2c2;border-right-color:#9a9a9a;border-bottom-color:#9a9a9a;box-sizing:border-box"></div>
<div style="left:303.5px;top:234.3px;width:50.0px;height:14.0px;line-height:14.0px;text-align:center;white-space:nowrap;overflow:hidden;color:#1a1a1a;font-size:9px">예산선택</div>
<div style="left:354.5px;top:233.5px;width:58.5px;height:15px;line-height:15px;text-align:center;white-space:nowrap;overflow:hidden;color:#5e5e5e;font-size:9px">2022</div>
<div style="left:413px;top:233.5px;width:59.3px;height:15px;line-height:15px;text-align:center;white-space:nowrap;overflow:hidden;color:#6444a2;font-size:9px">649</div>
<div style="left:472.3px;top:233.5px;width:70.2px;height:15px;line-height:15px;text-align:center;white-space:nowrap;overflow:hidden;color:#5e5e5e;font-size:9px">2022-06-27</div>
<div style="left:545.5px;top:233.5px;width:60px;height:15px;line-height:15px;text-align:center;white-space:nowrap;overflow:hidden;color:#5e5e5e;font-size:9px">일반</div>
<div style="left:598.9px;top:239.5px;width:0;height:0;border-left:3.5px solid transparent;border-right:3.5px solid transparent;border-top:3.5px solid #222"></div>
<div style="left:609px;top:233.5px;width:51.7px;height:15px;line-height:15px;text-align:center;white-space:nowrap;overflow:hidden;color:#5e5e5e;font-size:9px">100077</div>
<div style="left:735px;top:234.0px;width:14.5px;height:13.5px;background:#f3f3f3;border:1px solid #a6bdd6;box-sizing:border-box;border-radius:1px"></div>
<svg style="position:absolute;left:735px;top:234.0px" width="14.5" height="13.5" viewBox="0 0 14 13"><circle cx="8.6" cy="5" r="2.7" fill="#dcf1f9" stroke="#5a5a5a" stroke-width="1"/><path d="M3.6 10.2L6.6 7.2" stroke="#25506e" stroke-width="2" stroke-linecap="round"/></svg>
<div style="left:749.3px;top:233.5px;width:52px;height:15px;line-height:15px;text-align:center;white-space:nowrap;overflow:hidden;color:#5e5e5e;font-size:9px">30060</div>
<div style="left:876px;top:234.0px;width:14.5px;height:13.5px;background:#f3f3f3;border:1px solid #a6bdd6;box-sizing:border-box;border-radius:1px"></div>
<svg style="position:absolute;left:876px;top:234.0px" width="14.5" height="13.5" viewBox="0 0 14 13"><circle cx="8.6" cy="5" r="2.7" fill="#dcf1f9" stroke="#5a5a5a" stroke-width="1"/><path d="M3.6 10.2L6.6 7.2" stroke="#25506e" stroke-width="2" stroke-linecap="round"/></svg>
<div style="left:890.6px;top:233.5px;width:72px;height:15px;line-height:15px;text-align:right;white-space:nowrap;overflow:hidden;color:#5e5e5e;font-size:9px">241,102,470</div>
<div style="left:967px;top:233.5px;width:114px;height:15px;line-height:15px;text-align:left;white-space:nowrap;overflow:hidden;color:#5e5e5e;font-size:9px">2020년도 경영평가성과급 ...</div>
<div style="left:1085px;top:233.5px;width:196px;height:15px;line-height:15px;text-align:left;white-space:nowrap;overflow:hidden;color:#5e5e5e;font-size:9px">2020년도 경영평가성과급 보험료</div>
<div style="left:1288px;top:233.5px;width:40px;height:15px;line-height:15px;text-align:center;white-space:nowrap;overflow:hidden;color:#5e5e5e;font-size:9px">기성</div>
<div style="left:1324.4px;top:239.5px;width:0;height:0;border-left:3.5px solid transparent;border-right:3.5px solid transparent;border-top:3.5px solid #222"></div>
<div style="left:1348.5px;top:233.5px;width:45.5px;height:15px;line-height:15px;text-align:left;white-space:nowrap;overflow:hidden;color:#5e5e5e;font-size:9px">2022-06-27</div>
<div style="left:176px;top:248.5px;width:1218px;height:15px;background:#f4f4f4"></div>
<div style="left:176px;top:248.5px;width:26.5px;height:15px;background:#e4eef8"></div>
<div style="left:413px;top:248.5px;width:59.3px;height:15px;background:#c1c1c1"></div>
<div style="left:890.6px;top:248.5px;width:74px;height:15px;background:#c1c1c1"></div>
<div style="left:176px;top:263.0px;width:1218px;height:1px;background:#d6d6d6"></div>
<div style="left:176px;top:248.5px;width:26.5px;height:15px;line-height:15px;text-align:center;white-space:nowrap;overflow:hidden;color:#666;font-size:9px">2</div>
<div style="left:234.5px;top:251.0px;width:10px;height:10px;background:#fff;border:1px solid #8c8c8c;box-sizing:border-box;border-radius:2px"></div>
<div style="left:251.5px;top:249.0px;width:50.0px;height:14.0px;background:#dcdcdc;border:1px solid #c2c2c2;border-right-color:#9a9a9a;border-bottom-color:#9a9a9a;box-sizing:border-box"></div>
<div style="left:251.5px;top:249.3px;width:50.0px;height:14.0px;line-height:14.0px;text-align:center;white-space:nowrap;overflow:hidden;color:#1a1a1a;font-size:9px">입력화면</div>
<div style="left:303.5px;top:249.0px;width:50.0px;height:14.0px;background:#dcdcdc;border:1px solid #c2c2c2;border-right-color:#9a9a9a;border-bottom-color:#9a9a9a;box-sizing:border-box"></div>
<div style="left:303.5px;top:249.3px;width:50.0px;height:14.0px;line-height:14.0px;text-align:center;white-space:nowrap;overflow:hidden;color:#1a1a1a;font-size:9px">예산선택</div>
<div style="left:354.5px;top:248.5px;width:58.5px;height:15px;line-height:15px;text-align:center;white-space:nowrap;overflow:hidden;color:#5e5e5e;font-size:9px">2022</div>
<div style="left:413px;top:248.5px;width:59.3px;height:15px;line-height:15px;text-align:center;white-space:nowrap;overflow:hidden;color:#6444a2;font-size:9px">646</div>
<div style="left:472.3px;top:248.5px;width:70.2px;height:15px;line-height:15px;text-align:center;white-space:nowrap;overflow:hidden;color:#5e5e5e;font-size:9px">2022-06-24</div>
<div style="left:545.5px;top:248.5px;width:60px;height:15px;line-height:15px;text-align:center;white-space:nowrap;overflow:hidden;color:#5e5e5e;font-size:9px">일반</div>
<div style="left:598.9px;top:254.5px;width:0;height:0;border-left:3.5px solid transparent;border-right:3.5px solid transparent;border-top:3.5px solid #222"></div>
<div style="left:609px;top:248.5px;width:51.7px;height:15px;line-height:15px;text-align:center;white-space:nowrap;overflow:hidden;color:#5e5e5e;font-size:9px">200098</div>
<div style="left:735px;top:249.0px;width:14.5px;height:13.5px;background:#f3f3f3;border:1px solid #a6bdd6;box-sizing:border-box;border-radius:1px"></div>
<svg style="position:absolute;left:735px;top:249.0px" width="14.5" height="13.5" viewBox="0 0 14 13"><circle cx="8.6" cy="5" r="2.7" fill="#dcf1f9" stroke="#5a5a5a" stroke-width="1"/><path d="M3.6 10.2L6.6 7.2" stroke="#25506e" stroke-width="2" stroke-linecap="round"/></svg>
<div style="left:749.3px;top:248.5px;width:52px;height:15px;line-height:15px;text-align:center;white-space:nowrap;overflow:hidden;color:#5e5e5e;font-size:9px">29000</div>
<div style="left:876px;top:249.0px;width:14.5px;height:13.5px;background:#f3f3f3;border:1px solid #a6bdd6;box-sizing:border-box;border-radius:1px"></div>
<svg style="position:absolute;left:876px;top:249.0px" width="14.5" height="13.5" viewBox="0 0 14 13"><circle cx="8.6" cy="5" r="2.7" fill="#dcf1f9" stroke="#5a5a5a" stroke-width="1"/><path d="M3.6 10.2L6.6 7.2" stroke="#25506e" stroke-width="2" stroke-linecap="round"/></svg>
<div style="left:890.6px;top:248.5px;width:72px;height:15px;line-height:15px;text-align:right;white-space:nowrap;overflow:hidden;color:#5e5e5e;font-size:9px">8,900</div>
<div style="left:967px;top:248.5px;width:114px;height:15px;line-height:15px;text-align:left;white-space:nowrap;overflow:hidden;color:#5e5e5e;font-size:9px">22.5 동부건축 전도금 여비...</div>
<div style="left:1085px;top:248.5px;width:196px;height:15px;line-height:15px;text-align:left;white-space:nowrap;overflow:hidden;color:#5e5e5e;font-size:9px">22.5 동부건축 전도금 여비교통비 수입결의(착...</div>
<div style="left:1288px;top:248.5px;width:40px;height:15px;line-height:15px;text-align:center;white-space:nowrap;overflow:hidden;color:#5e5e5e;font-size:9px">비기성</div>
<div style="left:1324.4px;top:254.5px;width:0;height:0;border-left:3.5px solid transparent;border-right:3.5px solid transparent;border-top:3.5px solid #222"></div>
<div style="left:1348.5px;top:248.5px;width:45.5px;height:15px;line-height:15px;text-align:left;white-space:nowrap;overflow:hidden;color:#5e5e5e;font-size:9px">2022-05-10</div>
<div style="left:176px;top:263.5px;width:1218px;height:15px;background:#ffffff"></div>
<div style="left:176px;top:263.5px;width:26.5px;height:15px;background:#e4eef8"></div>
<div style="left:413px;top:263.5px;width:59.3px;height:15px;background:#c1c1c1"></div>
<div style="left:890.6px;top:263.5px;width:74px;height:15px;background:#c1c1c1"></div>
<div style="left:176px;top:278.0px;width:1218px;height:1px;background:#d6d6d6"></div>
<div style="left:176px;top:263.5px;width:26.5px;height:15px;line-height:15px;text-align:center;white-space:nowrap;overflow:hidden;color:#666;font-size:9px">3</div>
<div style="left:234.5px;top:266.0px;width:10px;height:10px;background:#fff;border:1px solid #8c8c8c;box-sizing:border-box;border-radius:2px"></div>
<div style="left:251.5px;top:264.0px;width:50.0px;height:14.0px;background:#dcdcdc;border:1px solid #c2c2c2;border-right-color:#9a9a9a;border-bottom-color:#9a9a9a;box-sizing:border-box"></div>
<div style="left:251.5px;top:264.3px;width:50.0px;height:14.0px;line-height:14.0px;text-align:center;white-space:nowrap;overflow:hidden;color:#1a1a1a;font-size:9px">입력화면</div>
<div style="left:303.5px;top:264.0px;width:50.0px;height:14.0px;background:#dcdcdc;border:1px solid #c2c2c2;border-right-color:#9a9a9a;border-bottom-color:#9a9a9a;box-sizing:border-box"></div>
<div style="left:303.5px;top:264.3px;width:50.0px;height:14.0px;line-height:14.0px;text-align:center;white-space:nowrap;overflow:hidden;color:#1a1a1a;font-size:9px">예산선택</div>
<div style="left:354.5px;top:263.5px;width:58.5px;height:15px;line-height:15px;text-align:center;white-space:nowrap;overflow:hidden;color:#5e5e5e;font-size:9px">2022</div>
<div style="left:413px;top:263.5px;width:59.3px;height:15px;line-height:15px;text-align:center;white-space:nowrap;overflow:hidden;color:#6444a2;font-size:9px">643</div>
<div style="left:472.3px;top:263.5px;width:70.2px;height:15px;line-height:15px;text-align:center;white-space:nowrap;overflow:hidden;color:#5e5e5e;font-size:9px">2022-06-20</div>
<div style="left:545.5px;top:263.5px;width:60px;height:15px;line-height:15px;text-align:center;white-space:nowrap;overflow:hidden;color:#5e5e5e;font-size:9px">일반</div>
<div style="left:598.9px;top:269.5px;width:0;height:0;border-left:3.5px solid transparent;border-right:3.5px solid transparent;border-top:3.5px solid #222"></div>
<div style="left:609px;top:263.5px;width:51.7px;height:15px;line-height:15px;text-align:center;white-space:nowrap;overflow:hidden;color:#5e5e5e;font-size:9px">100077</div>
<div style="left:735px;top:264.0px;width:14.5px;height:13.5px;background:#f3f3f3;border:1px solid #a6bdd6;box-sizing:border-box;border-radius:1px"></div>
<svg style="position:absolute;left:735px;top:264.0px" width="14.5" height="13.5" viewBox="0 0 14 13"><circle cx="8.6" cy="5" r="2.7" fill="#dcf1f9" stroke="#5a5a5a" stroke-width="1"/><path d="M3.6 10.2L6.6 7.2" stroke="#25506e" stroke-width="2" stroke-linecap="round"/></svg>
<div style="left:749.3px;top:263.5px;width:52px;height:15px;line-height:15px;text-align:center;white-space:nowrap;overflow:hidden;color:#5e5e5e;font-size:9px">30060</div>
<div style="left:876px;top:264.0px;width:14.5px;height:13.5px;background:#f3f3f3;border:1px solid #a6bdd6;box-sizing:border-box;border-radius:1px"></div>
<svg style="position:absolute;left:876px;top:264.0px" width="14.5" height="13.5" viewBox="0 0 14 13"><circle cx="8.6" cy="5" r="2.7" fill="#dcf1f9" stroke="#5a5a5a" stroke-width="1"/><path d="M3.6 10.2L6.6 7.2" stroke="#25506e" stroke-width="2" stroke-linecap="round"/></svg>
<div style="left:890.6px;top:263.5px;width:72px;height:15px;line-height:15px;text-align:right;white-space:nowrap;overflow:hidden;color:#5e5e5e;font-size:9px">255,709,691</div>
<div style="left:967px;top:263.5px;width:114px;height:15px;line-height:15px;text-align:left;white-space:nowrap;overflow:hidden;color:#5e5e5e;font-size:9px">철도차량 청소사업 용역 (2...</div>
<div style="left:1085px;top:263.5px;width:196px;height:15px;line-height:15px;text-align:left;white-space:nowrap;overflow:hidden;color:#5e5e5e;font-size:9px">철도차량 청소사업 용역 (2022년 5월) 방역</div>
<div style="left:1288px;top:263.5px;width:40px;height:15px;line-height:15px;text-align:center;white-space:nowrap;overflow:hidden;color:#5e5e5e;font-size:9px">기성</div>
<div style="left:1324.4px;top:269.5px;width:0;height:0;border-left:3.5px solid transparent;border-right:3.5px solid transparent;border-top:3.5px solid #222"></div>
<div style="left:1348.5px;top:263.5px;width:45.5px;height:15px;line-height:15px;text-align:left;white-space:nowrap;overflow:hidden;color:#5e5e5e;font-size:9px">2022-06-20</div>
<div style="left:176px;top:278.5px;width:1218px;height:15px;background:#f4f4f4"></div>
<div style="left:176px;top:278.5px;width:26.5px;height:15px;background:#e4eef8"></div>
<div style="left:413px;top:278.5px;width:59.3px;height:15px;background:#c1c1c1"></div>
<div style="left:890.6px;top:278.5px;width:74px;height:15px;background:#c1c1c1"></div>
<div style="left:176px;top:293.0px;width:1218px;height:1px;background:#d6d6d6"></div>
<div style="left:176px;top:278.5px;width:26.5px;height:15px;line-height:15px;text-align:center;white-space:nowrap;overflow:hidden;color:#666;font-size:9px">4</div>
<div style="left:234.5px;top:281.0px;width:10px;height:10px;background:#fff;border:1px solid #8c8c8c;box-sizing:border-box;border-radius:2px"></div>
<div style="left:251.5px;top:279.0px;width:50.0px;height:14.0px;background:#dcdcdc;border:1px solid #c2c2c2;border-right-color:#9a9a9a;border-bottom-color:#9a9a9a;box-sizing:border-box"></div>
<div style="left:251.5px;top:279.3px;width:50.0px;height:14.0px;line-height:14.0px;text-align:center;white-space:nowrap;overflow:hidden;color:#1a1a1a;font-size:9px">입력화면</div>
<div style="left:303.5px;top:279.0px;width:50.0px;height:14.0px;background:#dcdcdc;border:1px solid #c2c2c2;border-right-color:#9a9a9a;border-bottom-color:#9a9a9a;box-sizing:border-box"></div>
<div style="left:303.5px;top:279.3px;width:50.0px;height:14.0px;line-height:14.0px;text-align:center;white-space:nowrap;overflow:hidden;color:#1a1a1a;font-size:9px">예산선택</div>
<div style="left:354.5px;top:278.5px;width:58.5px;height:15px;line-height:15px;text-align:center;white-space:nowrap;overflow:hidden;color:#5e5e5e;font-size:9px">2022</div>
<div style="left:413px;top:278.5px;width:59.3px;height:15px;line-height:15px;text-align:center;white-space:nowrap;overflow:hidden;color:#6444a2;font-size:9px">642</div>
<div style="left:472.3px;top:278.5px;width:70.2px;height:15px;line-height:15px;text-align:center;white-space:nowrap;overflow:hidden;color:#5e5e5e;font-size:9px">2022-06-20</div>
<div style="left:545.5px;top:278.5px;width:60px;height:15px;line-height:15px;text-align:center;white-space:nowrap;overflow:hidden;color:#5e5e5e;font-size:9px">일반</div>
<div style="left:598.9px;top:284.5px;width:0;height:0;border-left:3.5px solid transparent;border-right:3.5px solid transparent;border-top:3.5px solid #222"></div>
<div style="left:609px;top:278.5px;width:51.7px;height:15px;line-height:15px;text-align:center;white-space:nowrap;overflow:hidden;color:#5e5e5e;font-size:9px">100077</div>
<div style="left:735px;top:279.0px;width:14.5px;height:13.5px;background:#f3f3f3;border:1px solid #a6bdd6;box-sizing:border-box;border-radius:1px"></div>
<svg style="position:absolute;left:735px;top:279.0px" width="14.5" height="13.5" viewBox="0 0 14 13"><circle cx="8.6" cy="5" r="2.7" fill="#dcf1f9" stroke="#5a5a5a" stroke-width="1"/><path d="M3.6 10.2L6.6 7.2" stroke="#25506e" stroke-width="2" stroke-linecap="round"/></svg>
<div style="left:749.3px;top:278.5px;width:52px;height:15px;line-height:15px;text-align:center;white-space:nowrap;overflow:hidden;color:#5e5e5e;font-size:9px">30060</div>
<div style="left:876px;top:279.0px;width:14.5px;height:13.5px;background:#f3f3f3;border:1px solid #a6bdd6;box-sizing:border-box;border-radius:1px"></div>
<svg style="position:absolute;left:876px;top:279.0px" width="14.5" height="13.5" viewBox="0 0 14 13"><circle cx="8.6" cy="5" r="2.7" fill="#dcf1f9" stroke="#5a5a5a" stroke-width="1"/><path d="M3.6 10.2L6.6 7.2" stroke="#25506e" stroke-width="2" stroke-linecap="round"/></svg>
<div style="left:890.6px;top:278.5px;width:72px;height:15px;line-height:15px;text-align:right;white-space:nowrap;overflow:hidden;color:#5e5e5e;font-size:9px">100,167,843</div>
<div style="left:967px;top:278.5px;width:114px;height:15px;line-height:15px;text-align:left;white-space:nowrap;overflow:hidden;color:#5e5e5e;font-size:9px">SR 객차비품 취급업무(202...</div>
<div style="left:1085px;top:278.5px;width:196px;height:15px;line-height:15px;text-align:left;white-space:nowrap;overflow:hidden;color:#5e5e5e;font-size:9px">SR 객차비품 취급업무(2022년 5월) 기성</div>
<div style="left:1288px;top:278.5px;width:40px;height:15px;line-height:15px;text-align:center;white-space:nowrap;overflow:hidden;color:#5e5e5e;font-size:9px">기성</div>
<div style="left:1324.4px;top:284.5px;width:0;height:0;border-left:3.5px solid transparent;border-right:3.5px solid transparent;border-top:3.5px solid #222"></div>
<div style="left:1348.5px;top:278.5px;width:45.5px;height:15px;line-height:15px;text-align:left;white-space:nowrap;overflow:hidden;color:#5e5e5e;font-size:9px">2022-06-20</div>
<div style="left:176px;top:293.5px;width:1218px;height:15px;background:#ffffff"></div>
<div style="left:176px;top:293.5px;width:26.5px;height:15px;background:#e4eef8"></div>
<div style="left:413px;top:293.5px;width:59.3px;height:15px;background:#c1c1c1"></div>
<div style="left:890.6px;top:293.5px;width:74px;height:15px;background:#c1c1c1"></div>
<div style="left:176px;top:308.0px;width:1218px;height:1px;background:#d6d6d6"></div>
<div style="left:176px;top:293.5px;width:26.5px;height:15px;line-height:15px;text-align:center;white-space:nowrap;overflow:hidden;color:#666;font-size:9px">5</div>
<div style="left:234.5px;top:296.0px;width:10px;height:10px;background:#fff;border:1px solid #8c8c8c;box-sizing:border-box;border-radius:2px"></div>
<div style="left:251.5px;top:294.0px;width:50.0px;height:14.0px;background:#dcdcdc;border:1px solid #c2c2c2;border-right-color:#9a9a9a;border-bottom-color:#9a9a9a;box-sizing:border-box"></div>
<div style="left:251.5px;top:294.3px;width:50.0px;height:14.0px;line-height:14.0px;text-align:center;white-space:nowrap;overflow:hidden;color:#1a1a1a;font-size:9px">입력화면</div>
<div style="left:303.5px;top:294.0px;width:50.0px;height:14.0px;background:#dcdcdc;border:1px solid #c2c2c2;border-right-color:#9a9a9a;border-bottom-color:#9a9a9a;box-sizing:border-box"></div>
<div style="left:303.5px;top:294.3px;width:50.0px;height:14.0px;line-height:14.0px;text-align:center;white-space:nowrap;overflow:hidden;color:#1a1a1a;font-size:9px">예산선택</div>
<div style="left:354.5px;top:293.5px;width:58.5px;height:15px;line-height:15px;text-align:center;white-space:nowrap;overflow:hidden;color:#5e5e5e;font-size:9px">2022</div>
<div style="left:413px;top:293.5px;width:59.3px;height:15px;line-height:15px;text-align:center;white-space:nowrap;overflow:hidden;color:#6444a2;font-size:9px">641</div>
<div style="left:472.3px;top:293.5px;width:70.2px;height:15px;line-height:15px;text-align:center;white-space:nowrap;overflow:hidden;color:#5e5e5e;font-size:9px">2022-06-20</div>
<div style="left:545.5px;top:293.5px;width:60px;height:15px;line-height:15px;text-align:center;white-space:nowrap;overflow:hidden;color:#5e5e5e;font-size:9px">일반</div>
<div style="left:598.9px;top:299.5px;width:0;height:0;border-left:3.5px solid transparent;border-right:3.5px solid transparent;border-top:3.5px solid #222"></div>
<div style="left:609px;top:293.5px;width:51.7px;height:15px;line-height:15px;text-align:center;white-space:nowrap;overflow:hidden;color:#5e5e5e;font-size:9px">100077</div>
<div style="left:735px;top:294.0px;width:14.5px;height:13.5px;background:#f3f3f3;border:1px solid #a6bdd6;box-sizing:border-box;border-radius:1px"></div>
<svg style="position:absolute;left:735px;top:294.0px" width="14.5" height="13.5" viewBox="0 0 14 13"><circle cx="8.6" cy="5" r="2.7" fill="#dcf1f9" stroke="#5a5a5a" stroke-width="1"/><path d="M3.6 10.2L6.6 7.2" stroke="#25506e" stroke-width="2" stroke-linecap="round"/></svg>
<div style="left:749.3px;top:293.5px;width:52px;height:15px;line-height:15px;text-align:center;white-space:nowrap;overflow:hidden;color:#5e5e5e;font-size:9px">30060</div>
<div style="left:876px;top:294.0px;width:14.5px;height:13.5px;background:#f3f3f3;border:1px solid #a6bdd6;box-sizing:border-box;border-radius:1px"></div>
<svg style="position:absolute;left:876px;top:294.0px" width="14.5" height="13.5" viewBox="0 0 14 13"><circle cx="8.6" cy="5" r="2.7" fill="#dcf1f9" stroke="#5a5a5a" stroke-width="1"/><path d="M3.6 10.2L6.6 7.2" stroke="#25506e" stroke-width="2" stroke-linecap="round"/></svg>
<div style="left:890.6px;top:293.5px;width:72px;height:15px;line-height:15px;text-align:right;white-space:nowrap;overflow:hidden;color:#5e5e5e;font-size:9px">604,697,873</div>
<div style="left:967px;top:293.5px;width:114px;height:15px;line-height:15px;text-align:left;white-space:nowrap;overflow:hidden;color:#5e5e5e;font-size:9px">고속철도차량(SRT) 청소용...</div>
<div style="left:1085px;top:293.5px;width:196px;height:15px;line-height:15px;text-align:left;white-space:nowrap;overflow:hidden;color:#5e5e5e;font-size:9px">고속철도차량(SRT) 청소용역(2022년5월) 기성</div>
<div style="left:1288px;top:293.5px;width:40px;height:15px;line-height:15px;text-align:center;white-space:nowrap;overflow:hidden;color:#5e5e5e;font-size:9px">기성</div>
<div style="left:1324.4px;top:299.5px;width:0;height:0;border-left:3.5px solid transparent;border-right:3.5px solid transparent;border-top:3.5px solid #222"></div>
<div style="left:1348.5px;top:293.5px;width:45.5px;height:15px;line-height:15px;text-align:left;white-space:nowrap;overflow:hidden;color:#5e5e5e;font-size:9px">2022-06-20</div>
<div style="left:176px;top:308.5px;width:1218px;height:15px;background:#f4f4f4"></div>
<div style="left:176px;top:308.5px;width:26.5px;height:15px;background:#e4eef8"></div>
<div style="left:413px;top:308.5px;width:59.3px;height:15px;background:#c1c1c1"></div>
<div style="left:890.6px;top:308.5px;width:74px;height:15px;background:#c1c1c1"></div>
<div style="left:176px;top:323.0px;width:1218px;height:1px;background:#d6d6d6"></div>
<div style="left:176px;top:308.5px;width:26.5px;height:15px;line-height:15px;text-align:center;white-space:nowrap;overflow:hidden;color:#666;font-size:9px">6</div>
<div style="left:234.5px;top:311.0px;width:10px;height:10px;background:#fff;border:1px solid #8c8c8c;box-sizing:border-box;border-radius:2px"></div>
<div style="left:251.5px;top:309.0px;width:50.0px;height:14.0px;background:#dcdcdc;border:1px solid #c2c2c2;border-right-color:#9a9a9a;border-bottom-color:#9a9a9a;box-sizing:border-box"></div>
<div style="left:251.5px;top:309.3px;width:50.0px;height:14.0px;line-height:14.0px;text-align:center;white-space:nowrap;overflow:hidden;color:#1a1a1a;font-size:9px">입력화면</div>
<div style="left:303.5px;top:309.0px;width:50.0px;height:14.0px;background:#dcdcdc;border:1px solid #c2c2c2;border-right-color:#9a9a9a;border-bottom-color:#9a9a9a;box-sizing:border-box"></div>
<div style="left:303.5px;top:309.3px;width:50.0px;height:14.0px;line-height:14.0px;text-align:center;white-space:nowrap;overflow:hidden;color:#1a1a1a;font-size:9px">예산선택</div>
<div style="left:354.5px;top:308.5px;width:58.5px;height:15px;line-height:15px;text-align:center;white-space:nowrap;overflow:hidden;color:#5e5e5e;font-size:9px">2022</div>
<div style="left:413px;top:308.5px;width:59.3px;height:15px;line-height:15px;text-align:center;white-space:nowrap;overflow:hidden;color:#6444a2;font-size:9px">640</div>
<div style="left:472.3px;top:308.5px;width:70.2px;height:15px;line-height:15px;text-align:center;white-space:nowrap;overflow:hidden;color:#5e5e5e;font-size:9px">2022-06-20</div>
<div style="left:545.5px;top:308.5px;width:60px;height:15px;line-height:15px;text-align:center;white-space:nowrap;overflow:hidden;color:#5e5e5e;font-size:9px">통합계산서</div>
<div style="left:598.9px;top:314.5px;width:0;height:0;border-left:3.5px solid transparent;border-right:3.5px solid transparent;border-top:3.5px solid #222"></div>
<div style="left:609px;top:308.5px;width:51.7px;height:15px;line-height:15px;text-align:center;white-space:nowrap;overflow:hidden;color:#5e5e5e;font-size:9px">100077</div>
<div style="left:735px;top:309.0px;width:14.5px;height:13.5px;background:#f3f3f3;border:1px solid #a6bdd6;box-sizing:border-box;border-radius:1px"></div>
<svg style="position:absolute;left:735px;top:309.0px" width="14.5" height="13.5" viewBox="0 0 14 13"><circle cx="8.6" cy="5" r="2.7" fill="#dcf1f9" stroke="#5a5a5a" stroke-width="1"/><path d="M3.6 10.2L6.6 7.2" stroke="#25506e" stroke-width="2" stroke-linecap="round"/></svg>
<div style="left:749.3px;top:308.5px;width:52px;height:15px;line-height:15px;text-align:center;white-space:nowrap;overflow:hidden;color:#5e5e5e;font-size:9px">30060</div>
<div style="left:876px;top:309.0px;width:14.5px;height:13.5px;background:#f3f3f3;border:1px solid #a6bdd6;box-sizing:border-box;border-radius:1px"></div>
<svg style="position:absolute;left:876px;top:309.0px" width="14.5" height="13.5" viewBox="0 0 14 13"><circle cx="8.6" cy="5" r="2.7" fill="#dcf1f9" stroke="#5a5a5a" stroke-width="1"/><path d="M3.6 10.2L6.6 7.2" stroke="#25506e" stroke-width="2" stroke-linecap="round"/></svg>
<div style="left:890.6px;top:308.5px;width:72px;height:15px;line-height:15px;text-align:right;white-space:nowrap;overflow:hidden;color:#5e5e5e;font-size:9px">196,279,961</div>
<div style="left:967px;top:308.5px;width:114px;height:15px;line-height:15px;text-align:left;white-space:nowrap;overflow:hidden;color:#5e5e5e;font-size:9px">객차비품취급업무서비스용...</div>
<div style="left:1085px;top:308.5px;width:196px;height:15px;line-height:15px;text-align:left;white-space:nowrap;overflow:hidden;color:#5e5e5e;font-size:9px">객차비품취급업무서비스용역(2022년5월) 기성</div>
<div style="left:1288px;top:308.5px;width:40px;height:15px;line-height:15px;text-align:center;white-space:nowrap;overflow:hidden;color:#5e5e5e;font-size:9px">기성</div>
<div style="left:1324.4px;top:314.5px;width:0;height:0;border-left:3.5px solid transparent;border-right:3.5px solid transparent;border-top:3.5px solid #222"></div>
<div style="left:1348.5px;top:308.5px;width:45.5px;height:15px;line-height:15px;text-align:left;white-space:nowrap;overflow:hidden;color:#5e5e5e;font-size:9px">2022-06-20</div>
<div style="left:176px;top:323.5px;width:1218px;height:15px;background:#ffffff"></div>
<div style="left:176px;top:323.5px;width:26.5px;height:15px;background:#e4eef8"></div>
<div style="left:413px;top:323.5px;width:59.3px;height:15px;background:#c1c1c1"></div>
<div style="left:890.6px;top:323.5px;width:74px;height:15px;background:#c1c1c1"></div>
<div style="left:176px;top:338.0px;width:1218px;height:1px;background:#d6d6d6"></div>
<div style="left:176px;top:323.5px;width:26.5px;height:15px;line-height:15px;text-align:center;white-space:nowrap;overflow:hidden;color:#666;font-size:9px">7</div>
<div style="left:234.5px;top:326.0px;width:10px;height:10px;background:#fff;border:1px solid #8c8c8c;box-sizing:border-box;border-radius:2px"></div>
<div style="left:251.5px;top:324.0px;width:50.0px;height:14.0px;background:#dcdcdc;border:1px solid #c2c2c2;border-right-color:#9a9a9a;border-bottom-color:#9a9a9a;box-sizing:border-box"></div>
<div style="left:251.5px;top:324.3px;width:50.0px;height:14.0px;line-height:14.0px;text-align:center;white-space:nowrap;overflow:hidden;color:#1a1a1a;font-size:9px">입력화면</div>
<div style="left:303.5px;top:324.0px;width:50.0px;height:14.0px;background:#dcdcdc;border:1px solid #c2c2c2;border-right-color:#9a9a9a;border-bottom-color:#9a9a9a;box-sizing:border-box"></div>
<div style="left:303.5px;top:324.3px;width:50.0px;height:14.0px;line-height:14.0px;text-align:center;white-space:nowrap;overflow:hidden;color:#1a1a1a;font-size:9px">예산선택</div>
<div style="left:354.5px;top:323.5px;width:58.5px;height:15px;line-height:15px;text-align:center;white-space:nowrap;overflow:hidden;color:#5e5e5e;font-size:9px">2022</div>
<div style="left:413px;top:323.5px;width:59.3px;height:15px;line-height:15px;text-align:center;white-space:nowrap;overflow:hidden;color:#6444a2;font-size:9px">639</div>
<div style="left:472.3px;top:323.5px;width:70.2px;height:15px;line-height:15px;text-align:center;white-space:nowrap;overflow:hidden;color:#5e5e5e;font-size:9px">2022-06-20</div>
<div style="left:545.5px;top:323.5px;width:60px;height:15px;line-height:15px;text-align:center;white-space:nowrap;overflow:hidden;color:#5e5e5e;font-size:9px">통합계산서</div>
<div style="left:598.9px;top:329.5px;width:0;height:0;border-left:3.5px solid transparent;border-right:3.5px solid transparent;border-top:3.5px solid #222"></div>
<div style="left:609px;top:323.5px;width:51.7px;height:15px;line-height:15px;text-align:center;white-space:nowrap;overflow:hidden;color:#5e5e5e;font-size:9px">100077</div>
<div style="left:735px;top:324.0px;width:14.5px;height:13.5px;background:#f3f3f3;border:1px solid #a6bdd6;box-sizing:border-box;border-radius:1px"></div>
<svg style="position:absolute;left:735px;top:324.0px" width="14.5" height="13.5" viewBox="0 0 14 13"><circle cx="8.6" cy="5" r="2.7" fill="#dcf1f9" stroke="#5a5a5a" stroke-width="1"/><path d="M3.6 10.2L6.6 7.2" stroke="#25506e" stroke-width="2" stroke-linecap="round"/></svg>
<div style="left:749.3px;top:323.5px;width:52px;height:15px;line-height:15px;text-align:center;white-space:nowrap;overflow:hidden;color:#5e5e5e;font-size:9px">30060</div>
<div style="left:876px;top:324.0px;width:14.5px;height:13.5px;background:#f3f3f3;border:1px solid #a6bdd6;box-sizing:border-box;border-radius:1px"></div>
<svg style="position:absolute;left:876px;top:324.0px" width="14.5" height="13.5" viewBox="0 0 14 13"><circle cx="8.6" cy="5" r="2.7" fill="#dcf1f9" stroke="#5a5a5a" stroke-width="1"/><path d="M3.6 10.2L6.6 7.2" stroke="#25506e" stroke-width="2" stroke-linecap="round"/></svg>
<div style="left:890.6px;top:323.5px;width:72px;height:15px;line-height:15px;text-align:right;white-space:nowrap;overflow:hidden;color:#5e5e5e;font-size:9px">96,120,410</div>
<div style="left:967px;top:323.5px;width:114px;height:15px;line-height:15px;text-align:left;white-space:nowrap;overflow:hidden;color:#5e5e5e;font-size:9px">객차비품취급업무서비스용...</div>
<div style="left:1085px;top:323.5px;width:196px;height:15px;line-height:15px;text-align:left;white-space:nowrap;overflow:hidden;color:#5e5e5e;font-size:9px">객차비품취급업무서비스용역(2022년5월) 기성</div>
<div style="left:1288px;top:323.5px;width:40px;height:15px;line-height:15px;text-align:center;white-space:nowrap;overflow:hidden;color:#5e5e5e;font-size:9px">기성</div>
<div style="left:1324.4px;top:329.5px;width:0;height:0;border-left:3.5px solid transparent;border-right:3.5px solid transparent;border-top:3.5px solid #222"></div>
<div style="left:1348.5px;top:323.5px;width:45.5px;height:15px;line-height:15px;text-align:left;white-space:nowrap;overflow:hidden;color:#5e5e5e;font-size:9px">2022-06-20</div>
<div style="left:176px;top:338.5px;width:1218px;height:15px;background:#fdf7e4"></div>
<div style="left:176px;top:338.5px;width:26.5px;height:15px;background:#e4eef8"></div>
<div style="left:890.6px;top:338.5px;width:74px;height:15px;background:#fdf7e4"></div>
<div style="left:176px;top:353.0px;width:1218px;height:1px;background:#d6d6d6"></div>
<div style="left:176px;top:338.5px;width:26.5px;height:15px;line-height:15px;text-align:center;white-space:nowrap;overflow:hidden;color:#666;font-size:9px">8</div>
<div style="left:234.5px;top:341.0px;width:10px;height:10px;background:#fff;border:1px solid #8c8c8c;box-sizing:border-box;border-radius:2px"></div>
<div style="left:251.5px;top:339.0px;width:50.0px;height:14.0px;background:#dcdcdc;border:1px solid #c2c2c2;border-right-color:#9a9a9a;border-bottom-color:#9a9a9a;box-sizing:border-box"></div>
<div style="left:251.5px;top:339.3px;width:50.0px;height:14.0px;line-height:14.0px;text-align:center;white-space:nowrap;overflow:hidden;color:#1a1a1a;font-size:9px">입력화면</div>
<div style="left:303.5px;top:339.0px;width:50.0px;height:14.0px;background:#dcdcdc;border:1px solid #c2c2c2;border-right-color:#9a9a9a;border-bottom-color:#9a9a9a;box-sizing:border-box"></div>
<div style="left:303.5px;top:339.3px;width:50.0px;height:14.0px;line-height:14.0px;text-align:center;white-space:nowrap;overflow:hidden;color:#1a1a1a;font-size:9px">예산선택</div>
<div style="left:354.5px;top:338.5px;width:58.5px;height:15px;line-height:15px;text-align:center;white-space:nowrap;overflow:hidden;color:#5e5e5e;font-size:9px">2022</div>
<div style="left:413px;top:338.5px;width:59.3px;height:15px;line-height:15px;text-align:center;white-space:nowrap;overflow:hidden;color:#6444a2;font-size:9px">638</div>
<div style="left:472.3px;top:338.5px;width:70.2px;height:15px;line-height:15px;text-align:center;white-space:nowrap;overflow:hidden;color:#5e5e5e;font-size:9px">2022-06-20</div>
<div style="left:545.5px;top:338.5px;width:60px;height:15px;line-height:15px;text-align:center;white-space:nowrap;overflow:hidden;color:#5e5e5e;font-size:9px">통합계산서</div>
<div style="left:598.9px;top:344.5px;width:0;height:0;border-left:3.5px solid transparent;border-right:3.5px solid transparent;border-top:3.5px solid #222"></div>
<div style="left:609px;top:338.5px;width:51.7px;height:15px;line-height:15px;text-align:center;white-space:nowrap;overflow:hidden;color:#5e5e5e;font-size:9px">100077</div>
<div style="left:735px;top:339.0px;width:14.5px;height:13.5px;background:#f3f3f3;border:1px solid #a6bdd6;box-sizing:border-box;border-radius:1px"></div>
<svg style="position:absolute;left:735px;top:339.0px" width="14.5" height="13.5" viewBox="0 0 14 13"><circle cx="8.6" cy="5" r="2.7" fill="#dcf1f9" stroke="#5a5a5a" stroke-width="1"/><path d="M3.6 10.2L6.6 7.2" stroke="#25506e" stroke-width="2" stroke-linecap="round"/></svg>
<div style="left:749.3px;top:338.5px;width:52px;height:15px;line-height:15px;text-align:center;white-space:nowrap;overflow:hidden;color:#5e5e5e;font-size:9px">30060</div>
<div style="left:876px;top:339.0px;width:14.5px;height:13.5px;background:#f3f3f3;border:1px solid #a6bdd6;box-sizing:border-box;border-radius:1px"></div>
<svg style="position:absolute;left:876px;top:339.0px" width="14.5" height="13.5" viewBox="0 0 14 13"><circle cx="8.6" cy="5" r="2.7" fill="#dcf1f9" stroke="#5a5a5a" stroke-width="1"/><path d="M3.6 10.2L6.6 7.2" stroke="#25506e" stroke-width="2" stroke-linecap="round"/></svg>
<div style="left:890.6px;top:338.5px;width:72px;height:15px;line-height:15px;text-align:right;white-space:nowrap;overflow:hidden;color:#5e5e5e;font-size:9px">337,792,385</div>
<div style="left:964.8px;top:339.1px;width:117.8px;height:14.2px;background:#fff;border:1px solid #f3b25a;box-sizing:border-box;border-radius:1px"></div>
<div style="left:967px;top:341.5px;width:113.5px;height:10px;background:#c9c9c9"></div>
<div style="left:967px;top:339.0px;width:113.5px;height:15px;line-height:15px;text-align:left;white-space:nowrap;overflow:hidden;color:#333;font-size:9px">객차비품취급업무서비스용역</div>
<div style="left:1085px;top:338.5px;width:196px;height:15px;line-height:15px;text-align:left;white-space:nowrap;overflow:hidden;color:#5e5e5e;font-size:9px">객차비품취급업무서비스용역(2022년5월) 기성</div>
<div style="left:1288px;top:338.5px;width:40px;height:15px;line-height:15px;text-align:center;white-space:nowrap;overflow:hidden;color:#5e5e5e;font-size:9px">기성</div>
<div style="left:1324.4px;top:344.5px;width:0;height:0;border-left:3.5px solid transparent;border-right:3.5px solid transparent;border-top:3.5px solid #222"></div>
<div style="left:1348.5px;top:338.5px;width:45.5px;height:15px;line-height:15px;text-align:left;white-space:nowrap;overflow:hidden;color:#5e5e5e;font-size:9px">2022-06-20</div>
<div style="left:176px;top:353.5px;width:1218px;height:15px;background:#ffffff"></div>
<div style="left:176px;top:353.5px;width:26.5px;height:15px;background:#e4eef8"></div>
<div style="left:413px;top:353.5px;width:59.3px;height:15px;background:#c1c1c1"></div>
<div style="left:890.6px;top:353.5px;width:74px;height:15px;background:#c1c1c1"></div>
<div style="left:176px;top:368.0px;width:1218px;height:1px;background:#d6d6d6"></div>
<div style="left:176px;top:353.5px;width:26.5px;height:15px;line-height:15px;text-align:center;white-space:nowrap;overflow:hidden;color:#666;font-size:9px">9</div>
<div style="left:234.5px;top:356.0px;width:10px;height:10px;background:#fff;border:1px solid #8c8c8c;box-sizing:border-box;border-radius:2px"></div>
<div style="left:251.5px;top:354.0px;width:50.0px;height:14.0px;background:#dcdcdc;border:1px solid #c2c2c2;border-right-color:#9a9a9a;border-bottom-color:#9a9a9a;box-sizing:border-box"></div>
<div style="left:251.5px;top:354.3px;width:50.0px;height:14.0px;line-height:14.0px;text-align:center;white-space:nowrap;overflow:hidden;color:#1a1a1a;font-size:9px">입력화면</div>
<div style="left:303.5px;top:354.0px;width:50.0px;height:14.0px;background:#dcdcdc;border:1px solid #c2c2c2;border-right-color:#9a9a9a;border-bottom-color:#9a9a9a;box-sizing:border-box"></div>
<div style="left:303.5px;top:354.3px;width:50.0px;height:14.0px;line-height:14.0px;text-align:center;white-space:nowrap;overflow:hidden;color:#1a1a1a;font-size:9px">예산선택</div>
<div style="left:354.5px;top:353.5px;width:58.5px;height:15px;line-height:15px;text-align:center;white-space:nowrap;overflow:hidden;color:#5e5e5e;font-size:9px">2022</div>
<div style="left:413px;top:353.5px;width:59.3px;height:15px;line-height:15px;text-align:center;white-space:nowrap;overflow:hidden;color:#6444a2;font-size:9px">636</div>
<div style="left:472.3px;top:353.5px;width:70.2px;height:15px;line-height:15px;text-align:center;white-space:nowrap;overflow:hidden;color:#5e5e5e;font-size:9px">2022-06-20</div>
<div style="left:545.5px;top:353.5px;width:60px;height:15px;line-height:15px;text-align:center;white-space:nowrap;overflow:hidden;color:#5e5e5e;font-size:9px">일반</div>
<div style="left:598.9px;top:359.5px;width:0;height:0;border-left:3.5px solid transparent;border-right:3.5px solid transparent;border-top:3.5px solid #222"></div>
<div style="left:609px;top:353.5px;width:51.7px;height:15px;line-height:15px;text-align:center;white-space:nowrap;overflow:hidden;color:#5e5e5e;font-size:9px">100077</div>
<div style="left:735px;top:354.0px;width:14.5px;height:13.5px;background:#f3f3f3;border:1px solid #a6bdd6;box-sizing:border-box;border-radius:1px"></div>
<svg style="position:absolute;left:735px;top:354.0px" width="14.5" height="13.5" viewBox="0 0 14 13"><circle cx="8.6" cy="5" r="2.7" fill="#dcf1f9" stroke="#5a5a5a" stroke-width="1"/><path d="M3.6 10.2L6.6 7.2" stroke="#25506e" stroke-width="2" stroke-linecap="round"/></svg>
<div style="left:749.3px;top:353.5px;width:52px;height:15px;line-height:15px;text-align:center;white-space:nowrap;overflow:hidden;color:#5e5e5e;font-size:9px">30060</div>
<div style="left:876px;top:354.0px;width:14.5px;height:13.5px;background:#f3f3f3;border:1px solid #a6bdd6;box-sizing:border-box;border-radius:1px"></div>
<svg style="position:absolute;left:876px;top:354.0px" width="14.5" height="13.5" viewBox="0 0 14 13"><circle cx="8.6" cy="5" r="2.7" fill="#dcf1f9" stroke="#5a5a5a" stroke-width="1"/><path d="M3.6 10.2L6.6 7.2" stroke="#25506e" stroke-width="2" stroke-linecap="round"/></svg>
<div style="left:890.6px;top:353.5px;width:72px;height:15px;line-height:15px;text-align:right;white-space:nowrap;overflow:hidden;color:#5e5e5e;font-size:9px">5,499,026,814</div>
<div style="left:967px;top:353.5px;width:114px;height:15px;line-height:15px;text-align:left;white-space:nowrap;overflow:hidden;color:#5e5e5e;font-size:9px">철도차량 청소사업 용역 (2...</div>
<div style="left:1085px;top:353.5px;width:196px;height:15px;line-height:15px;text-align:left;white-space:nowrap;overflow:hidden;color:#5e5e5e;font-size:9px">철도차량 청소사업 용역 (2022년 5월) 기성</div>
<div style="left:1288px;top:353.5px;width:40px;height:15px;line-height:15px;text-align:center;white-space:nowrap;overflow:hidden;color:#5e5e5e;font-size:9px">기성</div>
<div style="left:1324.4px;top:359.5px;width:0;height:0;border-left:3.5px solid transparent;border-right:3.5px solid transparent;border-top:3.5px solid #222"></div>
<div style="left:1348.5px;top:353.5px;width:45.5px;height:15px;line-height:15px;text-align:left;white-space:nowrap;overflow:hidden;color:#5e5e5e;font-size:9px">2022-06-20</div>
<div style="left:202.0px;top:219px;width:1px;height:149.5px;background:#d6d6d6"></div>
<div style="left:228.0px;top:219px;width:1px;height:149.5px;background:#d6d6d6"></div>
<div style="left:250.0px;top:219px;width:1px;height:149.5px;background:#d6d6d6"></div>
<div style="left:302.0px;top:219px;width:1px;height:149.5px;background:#d6d6d6"></div>
<div style="left:354.0px;top:219px;width:1px;height:149.5px;background:#d6d6d6"></div>
<div style="left:412.5px;top:219px;width:1px;height:149.5px;background:#d6d6d6"></div>
<div style="left:471.8px;top:219px;width:1px;height:149.5px;background:#d6d6d6"></div>
<div style="left:542.0px;top:219px;width:1px;height:149.5px;background:#d6d6d6"></div>
<div style="left:608.5px;top:219px;width:1px;height:149.5px;background:#d6d6d6"></div>
<div style="left:660.2px;top:219px;width:1px;height:149.5px;background:#d6d6d6"></div>
<div style="left:733.9px;top:219px;width:1px;height:149.5px;background:#d6d6d6"></div>
<div style="left:748.8px;top:219px;width:1px;height:149.5px;background:#d6d6d6"></div>
<div style="left:800.8px;top:219px;width:1px;height:149.5px;background:#d6d6d6"></div>
<div style="left:874.8px;top:219px;width:1px;height:149.5px;background:#d6d6d6"></div>
<div style="left:890.1px;top:219px;width:1px;height:149.5px;background:#d6d6d6"></div>
<div style="left:964.1px;top:219px;width:1px;height:149.5px;background:#d6d6d6"></div>
<div style="left:1082.3px;top:219px;width:1px;height:149.5px;background:#d6d6d6"></div>
<div style="left:1281.9px;top:219px;width:1px;height:149.5px;background:#d6d6d6"></div>
<div style="left:1333.6px;top:219px;width:1px;height:149.5px;background:#d6d6d6"></div>
<div style="left:1393.5px;top:219px;width:1px;height:149.5px;background:#d6d6d6"></div>
<div style="left:176px;top:219px;width:1px;height:149.5px;background:#cfcfcf"></div>
<div style="left:176px;top:219px;width:26.5px;height:14.5px;line-height:14.5px;text-align:center;white-space:nowrap;overflow:hidden;color:#333;font-size:9px;font-weight:bold">No</div>
<div style="left:202.5px;top:219px;width:26.0px;height:14.5px;line-height:14.5px;text-align:center;white-space:nowrap;overflow:hidden;color:#333;font-size:9px;font-weight:bold">상태</div>
<div style="left:228.5px;top:219px;width:22.0px;height:14.5px;line-height:14.5px;text-align:center;white-space:nowrap;overflow:hidden;color:#333;font-size:9px;font-weight:bold"></div>
<div style="left:250.5px;top:219px;width:52.0px;height:14.5px;line-height:14.5px;text-align:center;white-space:nowrap;overflow:hidden;color:#333;font-size:9px;font-weight:bold">입력</div>
<div style="left:302.5px;top:219px;width:52.0px;height:14.5px;line-height:14.5px;text-align:center;white-space:nowrap;overflow:hidden;color:#333;font-size:9px;font-weight:bold">예산</div>
<div style="left:354.5px;top:219px;width:58.5px;height:14.5px;line-height:14.5px;text-align:center;white-space:nowrap;overflow:hidden;color:#333;font-size:9px;font-weight:bold">회계년도</div>
<div style="left:413px;top:219px;width:59.30000000000001px;height:14.5px;line-height:14.5px;text-align:center;white-space:nowrap;overflow:hidden;color:#333;font-size:9px;font-weight:bold">수입신청번호</div>
<div style="left:472.3px;top:219px;width:70.19999999999999px;height:14.5px;line-height:14.5px;text-align:center;white-space:nowrap;overflow:hidden;color:#333;font-size:9px;font-weight:bold">수입신청일</div>
<div style="left:542.5px;top:219px;width:66.5px;height:14.5px;line-height:14.5px;text-align:center;white-space:nowrap;overflow:hidden;color:#333;font-size:9px;font-weight:bold">결의종류</div>
<div style="left:609px;top:219px;width:51.700000000000045px;height:14.5px;line-height:14.5px;text-align:center;white-space:nowrap;overflow:hidden;color:#333;font-size:9px;font-weight:bold">작성자</div>
<div style="left:660.7px;top:219px;width:73.69999999999993px;height:14.5px;line-height:14.5px;text-align:center;white-space:nowrap;overflow:hidden;color:#333;font-size:9px;font-weight:bold">작성자명</div>
<div style="left:734.4px;top:219px;width:14.899999999999977px;height:14.5px;line-height:14.5px;text-align:center;white-space:nowrap;overflow:hidden;color:#333;font-size:9px;font-weight:bold"></div>
<div style="left:749.3px;top:219px;width:52.0px;height:14.5px;line-height:14.5px;text-align:center;white-space:nowrap;overflow:hidden;color:#333;font-size:9px;font-weight:bold">수입부서</div>
<div style="left:801.3px;top:219px;width:74.0px;height:14.5px;line-height:14.5px;text-align:center;white-space:nowrap;overflow:hidden;color:#333;font-size:9px;font-weight:bold">수입부서명</div>
<div style="left:875.3px;top:219px;width:15.300000000000068px;height:14.5px;line-height:14.5px;text-align:center;white-space:nowrap;overflow:hidden;color:#333;font-size:9px;font-weight:bold"></div>
<div style="left:890.6px;top:219px;width:74.0px;height:14.5px;line-height:14.5px;text-align:center;white-space:nowrap;overflow:hidden;color:#333;font-size:9px;font-weight:bold">수입금액</div>
<div style="left:964.6px;top:219px;width:118.19999999999993px;height:14.5px;line-height:14.5px;text-align:center;white-space:nowrap;overflow:hidden;color:#333;font-size:9px;font-weight:bold">신청건명</div>
<div style="left:1082.8px;top:219px;width:199.60000000000014px;height:14.5px;line-height:14.5px;text-align:center;white-space:nowrap;overflow:hidden;color:#333;font-size:9px;font-weight:bold">세부내역</div>
<div style="left:1282.4px;top:219px;width:51.69999999999982px;height:14.5px;line-height:14.5px;text-align:center;white-space:nowrap;overflow:hidden;color:#333;font-size:9px;font-weight:bold">기성여부</div>
<div style="left:1348.5px;top:219px;width:45.5px;height:14.5px;line-height:14.5px;text-align:left;white-space:nowrap;overflow:hidden;color:#333;font-size:9px;font-weight:bold">신청회계일</div>
<div style="left:234.5px;top:221px;width:10px;height:10px;background:#fff;border:1px solid #8c8c8c;box-sizing:border-box;border-radius:2px"></div>
<div style="left:1394px;top:217px;width:12.5px;height:170px;background:#f0f0f0"></div>
<div style="left:1396.5px;top:222px;width:0;height:0;border-left:3.5px solid transparent;border-right:3.5px solid transparent;border-bottom:3.5px solid #9a9a9a"></div>
<div style="left:1395.5px;top:229px;width:9px;height:12.5px;background:#c1c1c1"></div>
<div style="left:1396.5px;top:379.0px;width:0;height:0;border-left:3.5px solid transparent;border-right:3.5px solid transparent;border-top:3.5px solid #333"></div>
<div style="left:176px;top:375px;width:1218px;height:12px;background:#f0f0f0"></div>
<div style="left:180.5px;top:377.5px;width:0;height:0;border-top:3.5px solid transparent;border-bottom:3.5px solid transparent;border-right:3.5px solid #999"></div>
<div style="left:465.0px;top:377.5px;width:0;height:0;border-top:3.5px solid transparent;border-bottom:3.5px solid transparent;border-left:3.5px solid #999"></div>
<div style="left:476.5px;top:377.5px;width:0;height:0;border-top:3.5px solid transparent;border-bottom:3.5px solid transparent;border-right:3.5px solid #999"></div>
<div style="left:485px;top:376.5px;width:383px;height:9px;background:#c1c1c1"></div>
<div style="left:1386.0px;top:377.5px;width:0;height:0;border-top:3.5px solid transparent;border-bottom:3.5px solid transparent;border-left:3.5px solid #222"></div>
<div style="left:1406px;top:217px;width:1px;height:170px;background:#cfcfcf"></div>
<div style="left:178.5px;top:388.9px;width:76.69999999999999px;height:15.300000000000011px;background:linear-gradient(#353c46,#7b8189);border-radius:2.5px;box-shadow:inset 0 0 0 1px rgba(40,46,54,.55)"></div>
<div style="left:178.5px;top:388.9px;width:76.69999999999999px;height:15.300000000000011px;line-height:15.300000000000011px;text-align:center;white-space:nowrap;overflow:hidden;color:#fff;font-size:9px;font-weight:bold;letter-spacing:0px">계산서통합처리</div>
<div style="left:1274.2px;top:389px;width:41.5px;height:15.5px;background:linear-gradient(#353c46,#7b8189);border-radius:2.5px;box-shadow:inset 0 0 0 1px rgba(40,46,54,.55)"></div>
<div style="left:1274.2px;top:389px;width:41.5px;height:15.5px;line-height:15.5px;text-align:center;white-space:nowrap;overflow:hidden;color:#fff;font-size:9px;font-weight:bold;letter-spacing:0px">행추가</div>
<div style="left:1318.1px;top:389px;width:41.200000000000045px;height:15.5px;background:linear-gradient(#353c46,#7b8189);border-radius:2.5px;box-shadow:inset 0 0 0 1px rgba(40,46,54,.55)"></div>
<div style="left:1318.1px;top:389px;width:41.200000000000045px;height:15.5px;line-height:15.5px;text-align:center;white-space:nowrap;overflow:hidden;color:#fff;font-size:9px;font-weight:bold;letter-spacing:0px">행삭제</div>
<div style="left:1361.7px;top:389px;width:44.899999999999864px;height:15.5px;background:linear-gradient(#353c46,#7b8189);border-radius:2.5px;box-shadow:inset 0 0 0 1px rgba(40,46,54,.55)"></div>
<div style="left:1361.7px;top:389px;width:44.899999999999864px;height:15.5px;line-height:15.5px;text-align:center;white-space:nowrap;overflow:hidden;color:#fff;font-size:9px;font-weight:bold;letter-spacing:0px">취　소</div>
<div style="left:176px;top:412px;width:8px;height:11px;background:linear-gradient(#5aa6e8,#2f7fd0);border-radius:2px"></div>
<div style="left:179px;top:414.5px;width:0;height:0;border-top:3px solid transparent;border-bottom:3px solid transparent;border-left:3px solid #fff"></div>
<div style="left:192px;top:410px;width:60px;height:15px;line-height:15px;text-align:left;white-space:nowrap;overflow:hidden;color:#555;font-size:9px">증빙자료입력</div>
<div style="left:283px;top:411.4px;width:88px;height:15.6px;background:linear-gradient(#18bba8,#079886);border-radius:2px"></div>
<div style="left:283px;top:410.09999999999997px;width:88px;height:15.6px;line-height:15.6px;text-align:center;white-space:nowrap;overflow:hidden;color:#fff;font-size:9px;font-weight:bold">세금계산서자료</div>
<div style="left:176px;top:429px;width:1231px;height:2px;background:#66ccef"></div>
<div style="left:176px;top:431px;width:1231px;height:14.5px;background:linear-gradient(#ffffff,#ececec)"></div>
<div style="left:176px;top:445px;width:1231px;height:1px;background:#c8c8c8"></div>
<div style="left:176px;top:445.5px;width:1231px;height:15px;background:#fdf7e4"></div>
<div style="left:176px;top:445.5px;width:27px;height:15px;background:#e4eef8"></div>
<div style="left:176px;top:460.0px;width:1231px;height:1px;background:#d6d6d6"></div>
<div style="left:176px;top:445.5px;width:27px;height:15px;line-height:15px;text-align:center;white-space:nowrap;overflow:hidden;color:#666;font-size:9px">1</div>
<div style="left:235.5px;top:448px;width:10px;height:10px;background:#fff;border:1px solid #8c8c8c;box-sizing:border-box;border-radius:2px"></div>
<div style="left:252.4px;top:446.0px;width:49.70000000000002px;height:14.0px;background:#dcdcdc;border:1px solid #c2c2c2;border-right-color:#9a9a9a;border-bottom-color:#9a9a9a;box-sizing:border-box"></div>
<div style="left:252.4px;top:446.3px;width:49.70000000000002px;height:14.0px;line-height:14.0px;text-align:center;white-space:nowrap;overflow:hidden;color:#1a1a1a;font-size:9px">입력화면</div>
<div style="left:303.1px;top:445.5px;width:51.89999999999998px;height:15px;line-height:15px;text-align:center;white-space:nowrap;overflow:hidden;color:#5e5e5e;font-size:9px">2022</div>
<div style="left:355px;top:445.5px;width:51.60000000000002px;height:15px;line-height:15px;text-align:center;white-space:nowrap;overflow:hidden;color:#5e5e5e;font-size:9px">638</div>
<div style="left:406.6px;top:445.5px;width:59.19999999999999px;height:15px;line-height:15px;text-align:center;white-space:nowrap;overflow:hidden;color:#5e5e5e;font-size:9px">세금계산서/...</div>
<div style="left:465.8px;top:445.5px;width:50.99999999999994px;height:15px;line-height:15px;text-align:center;white-space:nowrap;overflow:hidden;color:#5e5e5e;font-size:9px">23500</div>
<div style="left:519.8px;top:445.5px;width:108.60000000000002px;height:15px;line-height:15px;text-align:left;white-space:nowrap;overflow:hidden;color:#5e5e5e;font-size:9px">한국철도공사</div>
<div style="left:629px;top:446.0px;width:14.5px;height:13.5px;background:#f3f3f3;border:1px solid #a6bdd6;box-sizing:border-box;border-radius:1px"></div>
<svg style="position:absolute;left:629px;top:446.0px" width="14.5" height="13.5" viewBox="0 0 14 13"><circle cx="8.6" cy="5" r="2.7" fill="#dcf1f9" stroke="#5a5a5a" stroke-width="1"/><path d="M3.6 10.2L6.6 7.2" stroke="#25506e" stroke-width="2" stroke-linecap="round"/></svg>
<div style="left:643.7px;top:445.5px;width:65.5px;height:15px;line-height:15px;text-align:center;white-space:nowrap;overflow:hidden;color:#5e5e5e;font-size:9px">2022-05-31</div>
<div style="left:709.2px;top:445.5px;width:52.299999999999955px;height:15px;line-height:15px;text-align:center;white-space:nowrap;overflow:hidden;color:#5e5e5e;font-size:9px">211</div>
<div style="left:764.5px;top:445.5px;width:71.10000000000002px;height:15px;line-height:15px;text-align:left;white-space:nowrap;overflow:hidden;color:#5e5e5e;font-size:9px">과세매출</div>
<div style="left:836.2px;top:446.0px;width:14.5px;height:13.5px;background:#f3f3f3;border:1px solid #a6bdd6;box-sizing:border-box;border-radius:1px"></div>
<svg style="position:absolute;left:836.2px;top:446.0px" width="14.5" height="13.5" viewBox="0 0 14 13"><circle cx="8.6" cy="5" r="2.7" fill="#dcf1f9" stroke="#5a5a5a" stroke-width="1"/><path d="M3.6 10.2L6.6 7.2" stroke="#25506e" stroke-width="2" stroke-linecap="round"/></svg>
<div style="left:851px;top:445.5px;width:51.299999999999955px;height:15px;line-height:15px;text-align:center;white-space:nowrap;overflow:hidden;color:#5e5e5e;font-size:9px">0</div>
<div style="left:902.3px;top:445.5px;width:71.20000000000005px;height:15px;line-height:15px;text-align:right;white-space:nowrap;overflow:hidden;color:#5e5e5e;font-size:9px">307,083,986</div>
<div style="left:976.5px;top:445.5px;width:70.90000000000009px;height:15px;line-height:15px;text-align:right;white-space:nowrap;overflow:hidden;color:#5e5e5e;font-size:9px">30,708,399</div>
<div style="left:1050.4px;top:445.5px;width:78.29999999999995px;height:15px;line-height:15px;text-align:right;white-space:nowrap;overflow:hidden;color:#5e5e5e;font-size:9px">337,792,385</div>
<div style="left:1134.7px;top:445.5px;width:48.799999999999955px;height:15px;line-height:15px;text-align:left;white-space:nowrap;overflow:hidden;color:#5e5e5e;font-size:9px">08100125</div>
<div style="left:1186.5px;top:445.5px;width:70.90000000000009px;height:15px;line-height:15px;text-align:left;white-space:nowrap;overflow:hidden;color:#5e5e5e;font-size:9px">081 647910015...</div>
<div style="left:1257.8px;top:446.0px;width:14.5px;height:13.5px;background:#f3f3f3;border:1px solid #a6bdd6;box-sizing:border-box;border-radius:1px"></div>
<svg style="position:absolute;left:1257.8px;top:446.0px" width="14.5" height="13.5" viewBox="0 0 14 13"><circle cx="8.6" cy="5" r="2.7" fill="#dcf1f9" stroke="#5a5a5a" stroke-width="1"/><path d="M3.6 10.2L6.6 7.2" stroke="#25506e" stroke-width="2" stroke-linecap="round"/></svg>
<div style="left:1275.2px;top:445.5px;width:115.39999999999986px;height:15px;line-height:15px;text-align:left;white-space:nowrap;overflow:hidden;color:#5e5e5e;font-size:9px">객차비품취급업무서비스용...</div>
<div style="left:202.5px;top:431px;width:1px;height:30px;background:#d6d6d6"></div>
<div style="left:229.0px;top:431px;width:1px;height:30px;background:#d6d6d6"></div>
<div style="left:250.9px;top:431px;width:1px;height:30px;background:#d6d6d6"></div>
<div style="left:302.6px;top:431px;width:1px;height:30px;background:#d6d6d6"></div>
<div style="left:354.5px;top:431px;width:1px;height:30px;background:#d6d6d6"></div>
<div style="left:406.1px;top:431px;width:1px;height:30px;background:#d6d6d6"></div>
<div style="left:465.3px;top:431px;width:1px;height:30px;background:#d6d6d6"></div>
<div style="left:516.3px;top:431px;width:1px;height:30px;background:#d6d6d6"></div>
<div style="left:627.9px;top:431px;width:1px;height:30px;background:#d6d6d6"></div>
<div style="left:643.2px;top:431px;width:1px;height:30px;background:#d6d6d6"></div>
<div style="left:708.7px;top:431px;width:1px;height:30px;background:#d6d6d6"></div>
<div style="left:761.0px;top:431px;width:1px;height:30px;background:#d6d6d6"></div>
<div style="left:835.1px;top:431px;width:1px;height:30px;background:#d6d6d6"></div>
<div style="left:850.5px;top:431px;width:1px;height:30px;background:#d6d6d6"></div>
<div style="left:901.8px;top:431px;width:1px;height:30px;background:#d6d6d6"></div>
<div style="left:976.0px;top:431px;width:1px;height:30px;background:#d6d6d6"></div>
<div style="left:1049.9px;top:431px;width:1px;height:30px;background:#d6d6d6"></div>
<div style="left:1131.2px;top:431px;width:1px;height:30px;background:#d6d6d6"></div>
<div style="left:1183.0px;top:431px;width:1px;height:30px;background:#d6d6d6"></div>
<div style="left:1256.9px;top:431px;width:1px;height:30px;background:#d6d6d6"></div>
<div style="left:1271.7px;top:431px;width:1px;height:30px;background:#d6d6d6"></div>
<div style="left:1390.1px;top:431px;width:1px;height:30px;background:#d6d6d6"></div>
<div style="left:176px;top:431px;width:1px;height:165px;background:#cfcfcf"></div>
<div style="left:1406px;top:429px;width:1px;height:167px;background:#cfcfcf"></div>
<div style="left:176px;top:431px;width:27px;height:14.5px;line-height:14.5px;text-align:center;white-space:nowrap;overflow:hidden;color:#333;font-size:9px;font-weight:bold">No</div>
<div style="left:203px;top:431px;width:26.5px;height:14.5px;line-height:14.5px;text-align:center;white-space:nowrap;overflow:hidden;color:#333;font-size:9px;font-weight:bold">상태</div>
<div style="left:229.5px;top:431px;width:21.900000000000006px;height:14.5px;line-height:14.5px;text-align:center;white-space:nowrap;overflow:hidden;color:#333;font-size:9px;font-weight:bold"></div>
<div style="left:251.4px;top:431px;width:51.70000000000002px;height:14.5px;line-height:14.5px;text-align:center;white-space:nowrap;overflow:hidden;color:#333;font-size:9px;font-weight:bold">입력</div>
<div style="left:303.1px;top:431px;width:51.89999999999998px;height:14.5px;line-height:14.5px;text-align:center;white-space:nowrap;overflow:hidden;color:#333;font-size:9px;font-weight:bold">회계년도</div>
<div style="left:355px;top:431px;width:51.60000000000002px;height:14.5px;line-height:14.5px;text-align:center;white-space:nowrap;overflow:hidden;color:#333;font-size:9px;font-weight:bold">신청번호</div>
<div style="left:406.6px;top:431px;width:59.19999999999999px;height:14.5px;line-height:14.5px;text-align:center;white-space:nowrap;overflow:hidden;color:#333;font-size:9px;font-weight:bold">결제수단</div>
<div style="left:465.8px;top:431px;width:50.99999999999994px;height:14.5px;line-height:14.5px;text-align:center;white-space:nowrap;overflow:hidden;color:#333;font-size:9px;font-weight:bold">거래처코드</div>
<div style="left:516.8px;top:431px;width:111.60000000000002px;height:14.5px;line-height:14.5px;text-align:center;white-space:nowrap;overflow:hidden;color:#333;font-size:9px;font-weight:bold">상호</div>
<div style="left:628.4px;top:431px;width:15.300000000000068px;height:14.5px;line-height:14.5px;text-align:center;white-space:nowrap;overflow:hidden;color:#333;font-size:9px;font-weight:bold"></div>
<div style="left:643.7px;top:431px;width:65.5px;height:14.5px;line-height:14.5px;text-align:center;white-space:nowrap;overflow:hidden;color:#333;font-size:9px;font-weight:bold">계산서일자</div>
<div style="left:709.2px;top:431px;width:52.299999999999955px;height:14.5px;line-height:14.5px;text-align:center;white-space:nowrap;overflow:hidden;color:#333;font-size:9px;font-weight:bold">부가세구분</div>
<div style="left:761.5px;top:431px;width:74.10000000000002px;height:14.5px;line-height:14.5px;text-align:center;white-space:nowrap;overflow:hidden;color:#333;font-size:9px;font-weight:bold">부가세구분명</div>
<div style="left:835.6px;top:431px;width:15.399999999999977px;height:14.5px;line-height:14.5px;text-align:center;white-space:nowrap;overflow:hidden;color:#333;font-size:9px;font-weight:bold"></div>
<div style="left:851px;top:431px;width:51.299999999999955px;height:14.5px;line-height:14.5px;text-align:center;white-space:nowrap;overflow:hidden;color:#333;font-size:9px;font-weight:bold">부가세율</div>
<div style="left:902.3px;top:431px;width:74.20000000000005px;height:14.5px;line-height:14.5px;text-align:center;white-space:nowrap;overflow:hidden;color:#333;font-size:9px;font-weight:bold">공급가액</div>
<div style="left:976.5px;top:431px;width:73.90000000000009px;height:14.5px;line-height:14.5px;text-align:center;white-space:nowrap;overflow:hidden;color:#333;font-size:9px;font-weight:bold">부가세</div>
<div style="left:1050.4px;top:431px;width:81.29999999999995px;height:14.5px;line-height:14.5px;text-align:center;white-space:nowrap;overflow:hidden;color:#333;font-size:9px;font-weight:bold">합계금액</div>
<div style="left:1131.7px;top:431px;width:51.799999999999955px;height:14.5px;line-height:14.5px;text-align:center;white-space:nowrap;overflow:hidden;color:#333;font-size:9px;font-weight:bold">입금계좌</div>
<div style="left:1183.5px;top:431px;width:73.90000000000009px;height:14.5px;line-height:14.5px;text-align:center;white-space:nowrap;overflow:hidden;color:#333;font-size:9px;font-weight:bold">입금계좌명</div>
<div style="left:1257.4px;top:431px;width:14.799999999999955px;height:14.5px;line-height:14.5px;text-align:center;white-space:nowrap;overflow:hidden;color:#333;font-size:9px;font-weight:bold"></div>
<div style="left:1272.2px;top:431px;width:118.39999999999986px;height:14.5px;line-height:14.5px;text-align:center;white-space:nowrap;overflow:hidden;color:#333;font-size:9px;font-weight:bold">적요</div>
<div style="left:1390.6px;top:431px;width:15.900000000000091px;height:14.5px;line-height:14.5px;text-align:center;white-space:nowrap;overflow:hidden;color:#333;font-size:9px;font-weight:bold"></div>
<div style="left:235.5px;top:433px;width:10px;height:10px;background:#fff;border:1px solid #8c8c8c;box-sizing:border-box;border-radius:2px"></div>
<div style="left:177px;top:568px;width:1229px;height:15px;background:#abe1f6"></div>
<div style="left:202.5px;top:568px;width:1px;height:15px;background:#c4e9f8"></div>
<div style="left:229.0px;top:568px;width:1px;height:15px;background:#c4e9f8"></div>
<div style="left:250.9px;top:568px;width:1px;height:15px;background:#c4e9f8"></div>
<div style="left:302.6px;top:568px;width:1px;height:15px;background:#c4e9f8"></div>
<div style="left:354.5px;top:568px;width:1px;height:15px;background:#c4e9f8"></div>
<div style="left:406.1px;top:568px;width:1px;height:15px;background:#c4e9f8"></div>
<div style="left:465.3px;top:568px;width:1px;height:15px;background:#c4e9f8"></div>
<div style="left:516.3px;top:568px;width:1px;height:15px;background:#c4e9f8"></div>
<div style="left:627.9px;top:568px;width:1px;height:15px;background:#c4e9f8"></div>
<div style="left:643.2px;top:568px;width:1px;height:15px;background:#c4e9f8"></div>
<div style="left:708.7px;top:568px;width:1px;height:15px;background:#c4e9f8"></div>
<div style="left:761.0px;top:568px;width:1px;height:15px;background:#c4e9f8"></div>
<div style="left:835.1px;top:568px;width:1px;height:15px;background:#c4e9f8"></div>
<div style="left:850.5px;top:568px;width:1px;height:15px;background:#c4e9f8"></div>
<div style="left:901.8px;top:568px;width:1px;height:15px;background:#c4e9f8"></div>
<div style="left:976.0px;top:568px;width:1px;height:15px;background:#c4e9f8"></div>
<div style="left:1049.9px;top:568px;width:1px;height:15px;background:#c4e9f8"></div>
<div style="left:1131.2px;top:568px;width:1px;height:15px;background:#c4e9f8"></div>
<div style="left:1183.0px;top:568px;width:1px;height:15px;background:#c4e9f8"></div>
<div style="left:1256.9px;top:568px;width:1px;height:15px;background:#c4e9f8"></div>
<div style="left:1271.7px;top:568px;width:1px;height:15px;background:#c4e9f8"></div>
<div style="left:1390.1px;top:568px;width:1px;height:15px;background:#c4e9f8"></div>
<div style="left:406.6px;top:568px;width:59.2px;height:15px;line-height:15px;text-align:center;white-space:nowrap;overflow:hidden;color:#3a5f99;font-size:9px;font-weight:bold">합계</div>
<div style="left:902.3px;top:568px;width:70.5px;height:15px;line-height:15px;text-align:right;white-space:nowrap;overflow:hidden;color:#3a5f99;font-size:9px;font-weight:bold">307,083,986</div>
<div style="left:976.5px;top:568px;width:70.5px;height:15px;line-height:15px;text-align:right;white-space:nowrap;overflow:hidden;color:#3a5f99;font-size:9px;font-weight:bold">30,708,399</div>
<div style="left:1050.4px;top:568px;width:77.5px;height:15px;line-height:15px;text-align:right;white-space:nowrap;overflow:hidden;color:#3a5f99;font-size:9px;font-weight:bold">337,792,385</div>
<div style="left:177px;top:583px;width:1229px;height:13px;background:#f0f0f0"></div>
<div style="left:176px;top:596px;width:1231px;height:1px;background:#d0d0d0"></div>
<div style="left:180.5px;top:586.5px;width:0;height:0;border-top:3.5px solid transparent;border-bottom:3.5px solid transparent;border-right:3.5px solid #999"></div>
<div style="left:458.0px;top:586.5px;width:0;height:0;border-top:3.5px solid transparent;border-bottom:3.5px solid transparent;border-left:3.5px solid #999"></div>
<div style="left:469px;top:586.5px;width:0;height:0;border-top:3.5px solid transparent;border-bottom:3.5px solid transparent;border-right:3.5px solid #999"></div>
<div style="left:478px;top:586px;width:845px;height:8.6px;background:#c1c1c1"></div>
<div style="left:1400.5px;top:586.5px;width:0;height:0;border-top:3.5px solid transparent;border-bottom:3.5px solid transparent;border-left:3.5px solid #222"></div>
<div style="left:1274.5px;top:600.3px;width:40.700000000000045px;height:15.100000000000023px;background:linear-gradient(#353c46,#7b8189);border-radius:2.5px;box-shadow:inset 0 0 0 1px rgba(40,46,54,.55)"></div>
<div style="left:1274.5px;top:600.3px;width:40.700000000000045px;height:15.100000000000023px;line-height:15.100000000000023px;text-align:center;white-space:nowrap;overflow:hidden;color:#fff;font-size:9px;font-weight:bold;letter-spacing:0px">행추가</div>
<div style="left:1317.8px;top:600.3px;width:40.700000000000045px;height:15.100000000000023px;background:linear-gradient(#353c46,#7b8189);border-radius:2.5px;box-shadow:inset 0 0 0 1px rgba(40,46,54,.55)"></div>
<div style="left:1317.8px;top:600.3px;width:40.700000000000045px;height:15.100000000000023px;line-height:15.100000000000023px;text-align:center;white-space:nowrap;overflow:hidden;color:#fff;font-size:9px;font-weight:bold;letter-spacing:0px">행삭제</div>
<div style="left:1361.5px;top:600.3px;width:44.90000000000009px;height:15.100000000000023px;background:linear-gradient(#353c46,#7b8189);border-radius:2.5px;box-shadow:inset 0 0 0 1px rgba(40,46,54,.55)"></div>
<div style="left:1361.5px;top:600.3px;width:44.90000000000009px;height:15.100000000000023px;line-height:15.100000000000023px;text-align:center;white-space:nowrap;overflow:hidden;color:#fff;font-size:9px;font-weight:bold;letter-spacing:0px">취　소</div>
<div style="left:171px;top:632px;width:1241px;height:27px;background:#f2f2f2;border:1px solid #a3a3a3;box-sizing:border-box"></div>
<div style="left:187px;top:641.2px;width:9px;height:9px;background:radial-gradient(circle at 50% 40%,#b8e890,#7cc45a 55%,#5a9e3e);border:1px solid #6a9a50;box-sizing:border-box;border-radius:50%"></div>
<div style="left:209px;top:637px;width:300px;height:17px;line-height:17px;text-align:left;white-space:nowrap;overflow:hidden;color:#333;font-size:10px;font-weight:bold">수입 증빙 자료가 조회되었습니다.</div></body></html>
